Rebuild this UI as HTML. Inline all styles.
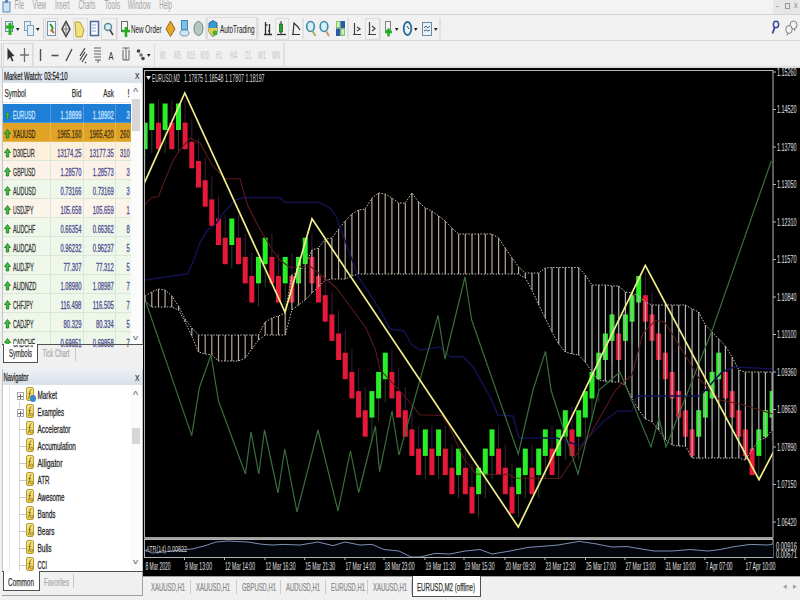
<!DOCTYPE html><html><head><meta charset="utf-8"><style>
*{margin:0;padding:0;box-sizing:border-box}
html,body{width:800px;height:600px;overflow:hidden;background:#f0f0f0;font-family:"Liberation Sans",sans-serif;position:relative}
.a{position:absolute}
.t{position:absolute;white-space:nowrap;line-height:1;transform-origin:left top}
.r{position:absolute;white-space:nowrap;line-height:1;transform-origin:right top;text-align:right}
</style></head><body>
<div class="a" style="left:0px;top:0px;width:800px;height:14px;background:#f3f3f3;"></div>
<div class="a" style="left:0px;top:14px;width:800px;height:1px;background:#d4d4d4;"></div>
<svg class="a" style="left:1px;top:0px" width="11" height="13"><rect x="2" y="2" width="7" height="10" fill="#cfe2f2" stroke="#5a88b8" stroke-width="1"/><rect x="4" y="0" width="3" height="3" fill="#5a88b8"/></svg>
<div class="a" style="left:773px;top:0px;width:27px;height:14px;background:#e6e6e6;"></div>
<div class="t" style="left:776px;top:0.54px;font-size:10px;color:#888;transform:scaleX(0.8);">-</div>
<div class="a" style="left:785px;top:3px;width:5px;height:6px;background:none;border:1px solid #999"></div>
<div class="t" style="left:794px;top:1.38px;font-size:9px;color:#888;transform:scaleX(0.8);">x</div>
<div class="a" style="left:0px;top:15px;width:800px;height:26px;background:#f1f1f1;"></div>
<div class="a" style="left:0px;top:40px;width:800px;height:1px;background:#d8d8d8;"></div>
<div class="a" style="left:0px;top:41px;width:800px;height:26px;background:#f1f1f1;"></div>
<div class="a" style="left:0px;top:66px;width:800px;height:2px;background:#dedede;"></div>
<svg class="a" style="left:0;top:15px" width="800" height="52" viewBox="0 15 800 52">
<line x1="1.5" y1="18" x2="1.5" y2="39" stroke="#d0d0d0" stroke-width="1"/>
<rect x="5.5" y="21.5" width="7" height="10" fill="#e8eef4" stroke="#6a8aa8"/>
<path d="M6,27 h8 M10,23 v12" stroke="#22b022" stroke-width="3"/>
<polygon points="16,28 19.5,28 17.75,31" fill="#202020"/>
<rect x="24.5" y="21.5" width="6" height="9" fill="#e4eef8" stroke="#7aa0c0"/>
<rect x="27.5" y="25.5" width="6" height="10" fill="#e4eef8" stroke="#7aa0c0"/>
<polygon points="36,28 39.5,28 37.75,31" fill="#202020"/>
<line x1="43.5" y1="18" x2="43.5" y2="39" stroke="#d0d0d0" stroke-width="1"/>
<rect x="45.5" y="18.5" width="12" height="21" fill="none" stroke="#dcdcdc" stroke-width="1"/>
<rect x="47.5" y="21.5" width="8" height="14" fill="#f4f8fc" stroke="#7890a8"/>
<path d="M50,24 l3,4 M53,28 l-2,3" stroke="#2a9a2a" stroke-width="2"/><path d="M51,30 l3,3" stroke="#d86a2a" stroke-width="2"/>
<polygon points="66,21.5 70,29 66,36.5 62,29" fill="#f4f4f4" stroke="#404040" stroke-width="1.5"/>
<path d="M63,29 h6 M66,24 v10" stroke="#707070" stroke-width="1"/>
<rect x="73.5" y="18.5" width="14" height="21" fill="none" stroke="#dcdcdc" stroke-width="1"/>
<polygon points="75,22 80,22 84,30 82,37 76,37" fill="#f2e27a" stroke="#b8a030" stroke-width="1"/>
<rect x="90.5" y="21.5" width="8" height="14" fill="#f8fbff" stroke="#4a6a9a" stroke-width="1.5"/>
<path d="M92,25 h4 M92,28 h4 M92,31 h4" stroke="#8aaad0" stroke-width="1"/>
<rect x="101.5" y="18.5" width="15" height="21" fill="none" stroke="#dcdcdc" stroke-width="1"/>
<circle cx="108" cy="27" r="3.5" fill="#d8ecf4" stroke="#5a8a9a" stroke-width="1.5"/>
<path d="M110,30 l3,5" stroke="#404040" stroke-width="1.5"/>
<line x1="117" y1="18" x2="117" y2="39" stroke="#d0d0d0" stroke-width="1"/>
<rect x="121.5" y="21.5" width="6" height="10" fill="#f4f8f4" stroke="#6a6a6a"/>
<path d="M122,31 h8 M126,27 v10" stroke="#22b022" stroke-width="2.6"/>
<text x="131" y="32.5" font-family="Liberation Sans" font-size="11" fill="#202020" textLength="30.5" lengthAdjust="spacingAndGlyphs">New Order</text>
<polygon points="170.5,21 175,29 170.5,36.5 166,29" fill="#e0a828" stroke="#9a6a10" stroke-width="1"/>
<rect x="181.5" y="20.5" width="6" height="9" fill="#7ac0e8" stroke="#3a8ac0"/>
<ellipse cx="184.5" cy="33" rx="4.5" ry="3" fill="#d0e4f0" stroke="#6a9ab8"/>
<ellipse cx="198.5" cy="28.5" rx="4.5" ry="7" fill="#b8c8c0" stroke="#6a8a7a" stroke-width="1"/>
<line x1="206" y1="18" x2="206" y2="39" stroke="#d0d0d0" stroke-width="1"/>
<rect x="207.5" y="17.5" width="49" height="22" fill="none" stroke="#dcdcdc" stroke-width="1"/>
<polygon points="213,20.5 217,23 217,32 213,37 209,32 209,23" fill="#3a9ad0" stroke="#2a6aa0"/>
<polygon points="209,28 217,28 217,32 213,37 209,32" fill="#e8d040"/><circle cx="215" cy="33" r="2.5" fill="#40b040"/>
<text x="220" y="32.5" font-family="Liberation Sans" font-size="11" fill="#202020" textLength="34.5" lengthAdjust="spacingAndGlyphs">AutoTrading</text>
<line x1="258" y1="18" x2="258" y2="39" stroke="#d0d0d0" stroke-width="1"/>
<path d="M265.5,22 v12 M265.5,25 h2 M269.5,24 v10 M268,31 h1.5 M264,34.5 h8" stroke="#303030" stroke-width="1.3"/>
<rect x="275.5" y="18.5" width="13" height="21" fill="none" stroke="#dcdcdc" stroke-width="1"/>
<path d="M281,21 v14" stroke="#303030" stroke-width="1"/><rect x="279.5" y="24" width="3" height="8" fill="#2aa02a" stroke="#104010" stroke-width=".6"/>
<path d="M277,34.5 h9" stroke="#303030" stroke-width="1.3"/>
<path d="M293,34 l1,-11 l4,4 l2,3 M292,34.5 h8" stroke="#303030" stroke-width="1.2" fill="none"/>
<line x1="303" y1="18" x2="303" y2="39" stroke="#d0d0d0" stroke-width="1"/>
<ellipse cx="310.5" cy="26.5" rx="3.8" ry="5" fill="#d8eef8" stroke="#3a8aa8" stroke-width="1.6"/><path d="M312.5,31 l3,5" stroke="#a8b060" stroke-width="2"/>
<ellipse cx="324" cy="26.5" rx="3.8" ry="5" fill="#d8eef8" stroke="#3a8aa8" stroke-width="1.6"/><path d="M326,31 l3,5" stroke="#c0a070" stroke-width="2"/>
<rect x="336" y="21" width="4.5" height="7.5" fill="#80c860"/><rect x="340.5" y="21" width="4.5" height="7.5" fill="#2a5aa0"/>
<rect x="336" y="28.5" width="4.5" height="7.5" fill="#2a5aa0"/><rect x="340.5" y="28.5" width="4.5" height="7.5" fill="#80c860"/>
<rect x="337" y="22" width="2.5" height="5" fill="#d0f0c0"/><rect x="341.5" y="29.5" width="2.5" height="5" fill="#d0f0c0"/>
<line x1="348" y1="18" x2="348" y2="39" stroke="#d0d0d0" stroke-width="1"/>
<path d="M354.5,23 v12 M353,34.5 h8 M357,27 l3,2 l-3,2" stroke="#404040" stroke-width="1.2" fill="none"/>
<rect x="365.5" y="18.5" width="14" height="21" fill="none" stroke="#dcdcdc" stroke-width="1"/>
<path d="M369.5,22 v13 M368,34.5 h8 M372,26 l3,2.5 l-3,2.5" stroke="#404040" stroke-width="1.2" fill="none"/>
<line x1="380" y1="18" x2="380" y2="39" stroke="#d0d0d0" stroke-width="1"/>
<rect x="385.5" y="21.5" width="5" height="9" fill="#f0f4f0" stroke="#808080"/>
<path d="M385,32 h7 M388.5,28.5 v8" stroke="#22b022" stroke-width="2.6"/>
<polygon points="395,28 398.5,28 396.75,31" fill="#202020"/>
<ellipse cx="407.5" cy="28.5" rx="3.8" ry="6.5" fill="#e8f4fa" stroke="#2a6a98" stroke-width="1.8"/>
<path d="M407,26 l2,3" stroke="#404040" stroke-width="1"/>
<polygon points="414,28 417.5,28 415.75,31" fill="#202020"/>
<rect x="422.5" y="22.5" width="9" height="13" fill="#e8f0f8" stroke="#6a8aaa"/>
<path d="M424,28 l2,-2 l2,2 l2,-2 M424,31 l2,-1 l2,1 l2,-1" stroke="#506070" stroke-width="1" fill="none"/>
<polygon points="434,28 437.5,28 435.75,31" fill="#202020"/>
<line x1="440" y1="18" x2="440" y2="39" stroke="#d0d0d0" stroke-width="1"/>
<ellipse cx="776" cy="24.5" rx="2.6" ry="3.2" fill="none" stroke="#3a4a98" stroke-width="1.5"/><path d="M774.6,27.5 L772.5,33.5" stroke="#3a4a98" stroke-width="1.8"/>
<ellipse cx="793.5" cy="25" rx="3.5" ry="4" fill="#f4f4f4" stroke="#808080"/><ellipse cx="789" cy="29.5" rx="3.2" ry="4" fill="#f4f4f4" stroke="#808080"/><path d="M788,33 l-1,2.5 M794,28.5 l1,2.5" stroke="#808080"/>
<line x1="1.5" y1="43" x2="1.5" y2="66" stroke="#d0d0d0" stroke-width="1"/>
<rect x="3.5" y="43.5" width="29" height="23" fill="none" stroke="#dcdcdc" stroke-width="1"/>
<path d="M7.5,48 v12 l2.5,-3 l2,4.5 l1.5,-0.7 l-2,-4.3 l3,-0.5 z" fill="#303030"/>
<path d="M24.5,48 v14 M20,55 h9" stroke="#707070" stroke-width="1.3"/>
<line x1="33" y1="43" x2="33" y2="66" stroke="#d8d8d8" stroke-width="1"/>
<path d="M40.5,49 v12" stroke="#505050" stroke-width="1.4"/>
<path d="M51.5,55.5 h7" stroke="#505050" stroke-width="1.6"/>
<path d="M66,61 l6,-12" stroke="#505050" stroke-width="1.4"/>
<path d="M80,56 l5,-8 M80,60 l5,-8 M82,62 l5,-8 M85,63 l1,-1" stroke="#404040" stroke-width="1.2"/>
<path d="M94,48 h7 M94,51 h7 M94,54 h7 M94,57 h7 M95,60 h6 M98,60 v3" stroke="#606060" stroke-width="1"/>
<text x="108.5" y="60" font-family="Liberation Sans" font-size="11" fill="#303030" textLength="5" lengthAdjust="spacingAndGlyphs">A</text>
<path d="M122.5,48 h7 M126,48 v12 M123,50 v10 h6 v-10" stroke="#606060" stroke-width="1" fill="none"/>
<circle cx="138.5" cy="51" r="1.8" fill="#404040"/><circle cx="141" cy="55" r="1.8" fill="#707070"/><circle cx="143" cy="58.5" r="1.8" fill="#404040"/>
<polygon points="147,54 150.5,54 148.75,57" fill="#202020"/>
<line x1="154.5" y1="44" x2="154.5" y2="65" stroke="#c8c8c8" stroke-width="1" stroke-dasharray="1,1"/>
<text x="160" y="59" font-family="Liberation Sans" font-size="10" fill="#c4c4c4" textLength="6" lengthAdjust="spacingAndGlyphs">M1</text>
<text x="174" y="59" font-family="Liberation Sans" font-size="10" fill="#c4c4c4" textLength="7" lengthAdjust="spacingAndGlyphs">M5</text>
<text x="187" y="59" font-family="Liberation Sans" font-size="10" fill="#c4c4c4" textLength="8" lengthAdjust="spacingAndGlyphs">M15</text>
<text x="200.5" y="59" font-family="Liberation Sans" font-size="10" fill="#c4c4c4" textLength="8.5" lengthAdjust="spacingAndGlyphs">M30</text>
<text x="216" y="59" font-family="Liberation Sans" font-size="10" fill="#c4c4c4" textLength="6" lengthAdjust="spacingAndGlyphs">H1</text>
<text x="230" y="59" font-family="Liberation Sans" font-size="10" fill="#c4c4c4" textLength="7" lengthAdjust="spacingAndGlyphs">H4</text>
<text x="245" y="59" font-family="Liberation Sans" font-size="10" fill="#c4c4c4" textLength="6" lengthAdjust="spacingAndGlyphs">D1</text>
<text x="258" y="59" font-family="Liberation Sans" font-size="10" fill="#c4c4c4" textLength="8" lengthAdjust="spacingAndGlyphs">W1</text>
<text x="272" y="59" font-family="Liberation Sans" font-size="10" fill="#c4c4c4" textLength="8" lengthAdjust="spacingAndGlyphs">MN</text>
<line x1="284" y1="43" x2="284" y2="66" stroke="#d0d0d0" stroke-width="1"/>
</svg>
<div class="a" style="left:0px;top:68px;width:143px;height:532px;background:#f0f0f0;"></div>
<div class="a" style="left:2px;top:68px;width:141px;height:277px;background:#ffffff;border-left:1px solid #c4c4c4;border-right:1px solid #c4c4c4"></div>
<div class="a" style="left:3px;top:68px;width:139px;height:15px;background:linear-gradient(#edf1f5,#d8e0e8)"></div>
<div class="a" style="left:3px;top:83px;width:128px;height:20px;background:#ffffff;"></div>
<div class="a" style="left:3px;top:102px;width:128px;height:1px;background:#e8e8e8;"></div>
<div class="a" style="left:0;top:0;width:800px;height:344px;overflow:hidden">
<div class="a" style="left:3px;top:103.5px;width:128px;height:19px;background:#1f7fd6;"></div>
<div class="a" style="left:3px;top:121.5px;width:128px;height:1px;background:rgba(255,255,255,0.2);"></div>
<div class="a" style="left:50px;top:103.5px;width:1px;height:19px;background:rgba(255,255,255,0.2);"></div>
<div class="a" style="left:83px;top:103.5px;width:1px;height:19px;background:rgba(255,255,255,0.2);"></div>
<div class="a" style="left:115px;top:103.5px;width:1px;height:19px;background:rgba(255,255,255,0.2);"></div>
<svg class="a" style="left:5px;top:111.5px" width="5" height="7"><polygon points="2.5,0 5,3 3.5,3 3.5,7 1.5,7 1.5,3 0,3" fill="#48c048" stroke="#1a6a1a" stroke-width="0.5"/></svg>
<div class="a" style="left:3px;top:122.5px;width:128px;height:19px;background:#e1a324;"></div>
<div class="a" style="left:3px;top:140.5px;width:128px;height:1px;background:rgba(255,255,255,0.2);"></div>
<div class="a" style="left:50px;top:122.5px;width:1px;height:19px;background:rgba(255,255,255,0.2);"></div>
<div class="a" style="left:83px;top:122.5px;width:1px;height:19px;background:rgba(255,255,255,0.2);"></div>
<div class="a" style="left:115px;top:122.5px;width:1px;height:19px;background:rgba(255,255,255,0.2);"></div>
<svg class="a" style="left:4px;top:128.5px" width="7" height="10"><polygon points="3.5,0.5 6.5,4.5 4.7,4.5 4.7,9 2.3,9 2.3,4.5 0.5,4.5" fill="#3cc03c" stroke="#1a701a" stroke-width="0.8"/></svg>
<div class="a" style="left:3px;top:141.5px;width:128px;height:19px;background:#fcefdc;"></div>
<div class="a" style="left:3px;top:159.5px;width:128px;height:1px;background:#dce6d6;"></div>
<div class="a" style="left:50px;top:141.5px;width:1px;height:19px;background:#dce6d6;"></div>
<div class="a" style="left:83px;top:141.5px;width:1px;height:19px;background:#dce6d6;"></div>
<div class="a" style="left:115px;top:141.5px;width:1px;height:19px;background:#dce6d6;"></div>
<svg class="a" style="left:4px;top:147.5px" width="7" height="10"><polygon points="3.5,0.5 6.5,4.5 4.7,4.5 4.7,9 2.3,9 2.3,4.5 0.5,4.5" fill="#3cc03c" stroke="#1a701a" stroke-width="0.8"/></svg>
<div class="a" style="left:3px;top:160.5px;width:128px;height:19px;background:#fbf3ea;"></div>
<div class="a" style="left:3px;top:178.5px;width:128px;height:1px;background:#dce6d6;"></div>
<div class="a" style="left:50px;top:160.5px;width:1px;height:19px;background:#dce6d6;"></div>
<div class="a" style="left:83px;top:160.5px;width:1px;height:19px;background:#dce6d6;"></div>
<div class="a" style="left:115px;top:160.5px;width:1px;height:19px;background:#dce6d6;"></div>
<svg class="a" style="left:4px;top:166.5px" width="7" height="10"><polygon points="3.5,0.5 6.5,4.5 4.7,4.5 4.7,9 2.3,9 2.3,4.5 0.5,4.5" fill="#3cc03c" stroke="#1a701a" stroke-width="0.8"/></svg>
<div class="a" style="left:3px;top:179.5px;width:128px;height:19px;background:#eef7ea;"></div>
<div class="a" style="left:3px;top:197.5px;width:128px;height:1px;background:#dce6d6;"></div>
<div class="a" style="left:50px;top:179.5px;width:1px;height:19px;background:#dce6d6;"></div>
<div class="a" style="left:83px;top:179.5px;width:1px;height:19px;background:#dce6d6;"></div>
<div class="a" style="left:115px;top:179.5px;width:1px;height:19px;background:#dce6d6;"></div>
<svg class="a" style="left:4px;top:185.5px" width="7" height="10"><polygon points="3.5,0.5 6.5,4.5 4.7,4.5 4.7,9 2.3,9 2.3,4.5 0.5,4.5" fill="#3cc03c" stroke="#1a701a" stroke-width="0.8"/></svg>
<div class="a" style="left:3px;top:198.5px;width:128px;height:19px;background:#fbf4ea;"></div>
<div class="a" style="left:3px;top:216.5px;width:128px;height:1px;background:#dce6d6;"></div>
<div class="a" style="left:50px;top:198.5px;width:1px;height:19px;background:#dce6d6;"></div>
<div class="a" style="left:83px;top:198.5px;width:1px;height:19px;background:#dce6d6;"></div>
<div class="a" style="left:115px;top:198.5px;width:1px;height:19px;background:#dce6d6;"></div>
<svg class="a" style="left:4px;top:204.5px" width="7" height="10"><polygon points="3.5,0.5 6.5,4.5 4.7,4.5 4.7,9 2.3,9 2.3,4.5 0.5,4.5" fill="#3cc03c" stroke="#1a701a" stroke-width="0.8"/></svg>
<div class="a" style="left:3px;top:217.5px;width:128px;height:19px;background:#eef7ea;"></div>
<div class="a" style="left:3px;top:235.5px;width:128px;height:1px;background:#dce6d6;"></div>
<div class="a" style="left:50px;top:217.5px;width:1px;height:19px;background:#dce6d6;"></div>
<div class="a" style="left:83px;top:217.5px;width:1px;height:19px;background:#dce6d6;"></div>
<div class="a" style="left:115px;top:217.5px;width:1px;height:19px;background:#dce6d6;"></div>
<svg class="a" style="left:4px;top:223.5px" width="7" height="10"><polygon points="3.5,0.5 6.5,4.5 4.7,4.5 4.7,9 2.3,9 2.3,4.5 0.5,4.5" fill="#3cc03c" stroke="#1a701a" stroke-width="0.8"/></svg>
<div class="a" style="left:3px;top:236.5px;width:128px;height:19px;background:#eef7ea;"></div>
<div class="a" style="left:3px;top:254.5px;width:128px;height:1px;background:#dce6d6;"></div>
<div class="a" style="left:50px;top:236.5px;width:1px;height:19px;background:#dce6d6;"></div>
<div class="a" style="left:83px;top:236.5px;width:1px;height:19px;background:#dce6d6;"></div>
<div class="a" style="left:115px;top:236.5px;width:1px;height:19px;background:#dce6d6;"></div>
<svg class="a" style="left:4px;top:242.5px" width="7" height="10"><polygon points="3.5,0.5 6.5,4.5 4.7,4.5 4.7,9 2.3,9 2.3,4.5 0.5,4.5" fill="#3cc03c" stroke="#1a701a" stroke-width="0.8"/></svg>
<div class="a" style="left:3px;top:255.5px;width:128px;height:19px;background:#eef7ea;"></div>
<div class="a" style="left:3px;top:273.5px;width:128px;height:1px;background:#dce6d6;"></div>
<div class="a" style="left:50px;top:255.5px;width:1px;height:19px;background:#dce6d6;"></div>
<div class="a" style="left:83px;top:255.5px;width:1px;height:19px;background:#dce6d6;"></div>
<div class="a" style="left:115px;top:255.5px;width:1px;height:19px;background:#dce6d6;"></div>
<svg class="a" style="left:4px;top:261.5px" width="7" height="10"><polygon points="3.5,0.5 6.5,4.5 4.7,4.5 4.7,9 2.3,9 2.3,4.5 0.5,4.5" fill="#3cc03c" stroke="#1a701a" stroke-width="0.8"/></svg>
<div class="a" style="left:3px;top:274.5px;width:128px;height:19px;background:#eef7ea;"></div>
<div class="a" style="left:3px;top:292.5px;width:128px;height:1px;background:#dce6d6;"></div>
<div class="a" style="left:50px;top:274.5px;width:1px;height:19px;background:#dce6d6;"></div>
<div class="a" style="left:83px;top:274.5px;width:1px;height:19px;background:#dce6d6;"></div>
<div class="a" style="left:115px;top:274.5px;width:1px;height:19px;background:#dce6d6;"></div>
<svg class="a" style="left:4px;top:280.5px" width="7" height="10"><polygon points="3.5,0.5 6.5,4.5 4.7,4.5 4.7,9 2.3,9 2.3,4.5 0.5,4.5" fill="#3cc03c" stroke="#1a701a" stroke-width="0.8"/></svg>
<div class="a" style="left:3px;top:293.5px;width:128px;height:19px;background:#eef7ea;"></div>
<div class="a" style="left:3px;top:311.5px;width:128px;height:1px;background:#dce6d6;"></div>
<div class="a" style="left:50px;top:293.5px;width:1px;height:19px;background:#dce6d6;"></div>
<div class="a" style="left:83px;top:293.5px;width:1px;height:19px;background:#dce6d6;"></div>
<div class="a" style="left:115px;top:293.5px;width:1px;height:19px;background:#dce6d6;"></div>
<svg class="a" style="left:4px;top:299.5px" width="7" height="10"><polygon points="3.5,0.5 6.5,4.5 4.7,4.5 4.7,9 2.3,9 2.3,4.5 0.5,4.5" fill="#3cc03c" stroke="#1a701a" stroke-width="0.8"/></svg>
<div class="a" style="left:3px;top:312.5px;width:128px;height:19px;background:#eef7ea;"></div>
<div class="a" style="left:3px;top:330.5px;width:128px;height:1px;background:#dce6d6;"></div>
<div class="a" style="left:50px;top:312.5px;width:1px;height:19px;background:#dce6d6;"></div>
<div class="a" style="left:83px;top:312.5px;width:1px;height:19px;background:#dce6d6;"></div>
<div class="a" style="left:115px;top:312.5px;width:1px;height:19px;background:#dce6d6;"></div>
<svg class="a" style="left:4px;top:318.5px" width="7" height="10"><polygon points="3.5,0.5 6.5,4.5 4.7,4.5 4.7,9 2.3,9 2.3,4.5 0.5,4.5" fill="#3cc03c" stroke="#1a701a" stroke-width="0.8"/></svg>
<div class="a" style="left:3px;top:331.5px;width:128px;height:19px;background:#eef7ea;"></div>
<div class="a" style="left:3px;top:349.5px;width:128px;height:1px;background:#dce6d6;"></div>
<div class="a" style="left:50px;top:331.5px;width:1px;height:19px;background:#dce6d6;"></div>
<div class="a" style="left:83px;top:331.5px;width:1px;height:19px;background:#dce6d6;"></div>
<div class="a" style="left:115px;top:331.5px;width:1px;height:19px;background:#dce6d6;"></div>
<svg class="a" style="left:4px;top:337.5px" width="7" height="10"><polygon points="3.5,0.5 6.5,4.5 4.7,4.5 4.7,9 2.3,9 2.3,4.5 0.5,4.5" fill="#3cc03c" stroke="#1a701a" stroke-width="0.8"/></svg>
</div>
<div class="a" style="left:131px;top:83px;width:11px;height:261px;background:#fbfbfb;"></div>
<div class="a" style="left:132px;top:99px;width:8px;height:32px;background:#d6d6d6;"></div>
<div class="a" style="left:2px;top:344px;width:141px;height:1px;background:#505050;"></div>
<div class="a" style="left:2px;top:345px;width:141px;height:21px;background:#f0f0f0;"></div>
<div class="a" style="left:3px;top:344px;width:35px;height:19px;background:#fff;border:1px solid #505050;border-top:none"></div>
<div class="a" style="left:75px;top:347px;width:1px;height:14px;background:#c8c8c8;"></div>
<div class="a" style="left:2px;top:369px;width:141px;height:231px;background:#ffffff;border-left:1px solid #c4c4c4;border-right:1px solid #c4c4c4"></div>
<div class="a" style="left:3px;top:369px;width:139px;height:16px;background:linear-gradient(#edf1f5,#d8e0e8)"></div>
<div class="a" style="left:131px;top:386px;width:11px;height:185px;background:#fbfbfb;"></div>
<div class="a" style="left:132px;top:428px;width:8px;height:16px;background:#d6d6d6;"></div>
<div class="a" style="left:9px;top:386px;width:1px;height:185px;background:#e6e6e6;"></div>
<div class="a" style="left:19px;top:401px;width:1px;height:170px;background:#d4d4d4;"></div>
<div class="a" style="left:17px;top:392px;width:7px;height:8px;background:#fff;border:1px solid #a8a8a8"></div>
<div class="a" style="left:18px;top:396px;width:5px;height:1px;background:#707070;"></div>
<div class="a" style="left:20px;top:394px;width:1px;height:5px;background:#707070;"></div>
<div class="a" style="left:26px;top:387px;width:8px;height:14px;background:linear-gradient(#f4e68a,#e6d050);border:1px solid #b89a38;border-radius:2px"></div>
<svg class="a" style="left:26px;top:387px" width="8" height="14"><path d="M5.5,2.5 Q4,2.5 3.8,5 L3.2,10 Q3,11.5 2,11.5 M2.5,6.5 H5" stroke="#8a6a18" stroke-width="0.9" fill="none"/><circle cx="5.6" cy="10.5" r="1.3" fill="none" stroke="#8a6a18" stroke-width="0.7"/></svg>
<div class="a" style="left:30px;top:395px;width:6px;height:7px;background:#3a86d0;border-radius:3px"></div>
<div class="a" style="left:17px;top:409px;width:7px;height:8px;background:#fff;border:1px solid #a8a8a8"></div>
<div class="a" style="left:18px;top:413px;width:5px;height:1px;background:#707070;"></div>
<div class="a" style="left:20px;top:411px;width:1px;height:5px;background:#707070;"></div>
<div class="a" style="left:26px;top:404px;width:8px;height:14px;background:linear-gradient(#f4e68a,#e6d050);border:1px solid #b89a38;border-radius:2px"></div>
<svg class="a" style="left:26px;top:404px" width="8" height="14"><path d="M5.5,2.5 Q4,2.5 3.8,5 L3.2,10 Q3,11.5 2,11.5 M2.5,6.5 H5" stroke="#8a6a18" stroke-width="0.9" fill="none"/><circle cx="5.6" cy="10.5" r="1.3" fill="none" stroke="#8a6a18" stroke-width="0.7"/></svg>
<div class="a" style="left:19px;top:429px;width:7px;height:1px;background:#c8c8c8;"></div>
<div class="a" style="left:26px;top:421px;width:8px;height:14px;background:linear-gradient(#f4e68a,#e6d050);border:1px solid #b89a38;border-radius:2px"></div>
<svg class="a" style="left:26px;top:421px" width="8" height="14"><path d="M5.5,2.5 Q4,2.5 3.8,5 L3.2,10 Q3,11.5 2,11.5 M2.5,6.5 H5" stroke="#8a6a18" stroke-width="0.9" fill="none"/><circle cx="5.6" cy="10.5" r="1.3" fill="none" stroke="#8a6a18" stroke-width="0.7"/></svg>
<div class="a" style="left:19px;top:446px;width:7px;height:1px;background:#c8c8c8;"></div>
<div class="a" style="left:26px;top:438px;width:8px;height:14px;background:linear-gradient(#f4e68a,#e6d050);border:1px solid #b89a38;border-radius:2px"></div>
<svg class="a" style="left:26px;top:438px" width="8" height="14"><path d="M5.5,2.5 Q4,2.5 3.8,5 L3.2,10 Q3,11.5 2,11.5 M2.5,6.5 H5" stroke="#8a6a18" stroke-width="0.9" fill="none"/><circle cx="5.6" cy="10.5" r="1.3" fill="none" stroke="#8a6a18" stroke-width="0.7"/></svg>
<div class="a" style="left:19px;top:463px;width:7px;height:1px;background:#c8c8c8;"></div>
<div class="a" style="left:26px;top:455px;width:8px;height:14px;background:linear-gradient(#f4e68a,#e6d050);border:1px solid #b89a38;border-radius:2px"></div>
<svg class="a" style="left:26px;top:455px" width="8" height="14"><path d="M5.5,2.5 Q4,2.5 3.8,5 L3.2,10 Q3,11.5 2,11.5 M2.5,6.5 H5" stroke="#8a6a18" stroke-width="0.9" fill="none"/><circle cx="5.6" cy="10.5" r="1.3" fill="none" stroke="#8a6a18" stroke-width="0.7"/></svg>
<div class="a" style="left:19px;top:480px;width:7px;height:1px;background:#c8c8c8;"></div>
<div class="a" style="left:26px;top:472px;width:8px;height:14px;background:linear-gradient(#f4e68a,#e6d050);border:1px solid #b89a38;border-radius:2px"></div>
<svg class="a" style="left:26px;top:472px" width="8" height="14"><path d="M5.5,2.5 Q4,2.5 3.8,5 L3.2,10 Q3,11.5 2,11.5 M2.5,6.5 H5" stroke="#8a6a18" stroke-width="0.9" fill="none"/><circle cx="5.6" cy="10.5" r="1.3" fill="none" stroke="#8a6a18" stroke-width="0.7"/></svg>
<div class="a" style="left:19px;top:497px;width:7px;height:1px;background:#c8c8c8;"></div>
<div class="a" style="left:26px;top:489px;width:8px;height:14px;background:linear-gradient(#f4e68a,#e6d050);border:1px solid #b89a38;border-radius:2px"></div>
<svg class="a" style="left:26px;top:489px" width="8" height="14"><path d="M5.5,2.5 Q4,2.5 3.8,5 L3.2,10 Q3,11.5 2,11.5 M2.5,6.5 H5" stroke="#8a6a18" stroke-width="0.9" fill="none"/><circle cx="5.6" cy="10.5" r="1.3" fill="none" stroke="#8a6a18" stroke-width="0.7"/></svg>
<div class="a" style="left:19px;top:514px;width:7px;height:1px;background:#c8c8c8;"></div>
<div class="a" style="left:26px;top:506px;width:8px;height:14px;background:linear-gradient(#f4e68a,#e6d050);border:1px solid #b89a38;border-radius:2px"></div>
<svg class="a" style="left:26px;top:506px" width="8" height="14"><path d="M5.5,2.5 Q4,2.5 3.8,5 L3.2,10 Q3,11.5 2,11.5 M2.5,6.5 H5" stroke="#8a6a18" stroke-width="0.9" fill="none"/><circle cx="5.6" cy="10.5" r="1.3" fill="none" stroke="#8a6a18" stroke-width="0.7"/></svg>
<div class="a" style="left:19px;top:531px;width:7px;height:1px;background:#c8c8c8;"></div>
<div class="a" style="left:26px;top:523px;width:8px;height:14px;background:linear-gradient(#f4e68a,#e6d050);border:1px solid #b89a38;border-radius:2px"></div>
<svg class="a" style="left:26px;top:523px" width="8" height="14"><path d="M5.5,2.5 Q4,2.5 3.8,5 L3.2,10 Q3,11.5 2,11.5 M2.5,6.5 H5" stroke="#8a6a18" stroke-width="0.9" fill="none"/><circle cx="5.6" cy="10.5" r="1.3" fill="none" stroke="#8a6a18" stroke-width="0.7"/></svg>
<div class="a" style="left:19px;top:548px;width:7px;height:1px;background:#c8c8c8;"></div>
<div class="a" style="left:26px;top:540px;width:8px;height:14px;background:linear-gradient(#f4e68a,#e6d050);border:1px solid #b89a38;border-radius:2px"></div>
<svg class="a" style="left:26px;top:540px" width="8" height="14"><path d="M5.5,2.5 Q4,2.5 3.8,5 L3.2,10 Q3,11.5 2,11.5 M2.5,6.5 H5" stroke="#8a6a18" stroke-width="0.9" fill="none"/><circle cx="5.6" cy="10.5" r="1.3" fill="none" stroke="#8a6a18" stroke-width="0.7"/></svg>
<div class="a" style="left:19px;top:565px;width:7px;height:1px;background:#c8c8c8;"></div>
<div class="a" style="left:26px;top:557px;width:8px;height:14px;background:linear-gradient(#f4e68a,#e6d050);border:1px solid #b89a38;border-radius:2px"></div>
<svg class="a" style="left:26px;top:557px" width="8" height="14"><path d="M5.5,2.5 Q4,2.5 3.8,5 L3.2,10 Q3,11.5 2,11.5 M2.5,6.5 H5" stroke="#8a6a18" stroke-width="0.9" fill="none"/><circle cx="5.6" cy="10.5" r="1.3" fill="none" stroke="#8a6a18" stroke-width="0.7"/></svg>
<div class="a" style="left:2px;top:571px;width:141px;height:1px;background:#505050;"></div>
<div class="a" style="left:2px;top:572px;width:141px;height:28px;background:#f0f0f0;"></div>
<div class="a" style="left:2px;top:595px;width:141px;height:1px;background:#a0a0a0;"></div>
<div class="a" style="left:142px;top:572px;width:1px;height:24px;background:#a0a0a0;"></div>
<div class="a" style="left:3px;top:571px;width:37px;height:20px;background:#fff;border:1px solid #505050;border-top:none"></div>
<div class="a" style="left:73px;top:574px;width:1px;height:14px;background:#c8c8c8;"></div>
<div class="a" style="left:143px;top:576px;width:657px;height:24px;background:#f0f0f0;"></div>
<div class="a" style="left:143px;top:576px;width:657px;height:1px;background:#a0a0a0;"></div>
<div class="a" style="left:190px;top:580px;width:1px;height:14px;background:#cccccc;"></div>
<div class="a" style="left:236px;top:580px;width:1px;height:14px;background:#cccccc;"></div>
<div class="a" style="left:280px;top:580px;width:1px;height:14px;background:#cccccc;"></div>
<div class="a" style="left:325px;top:580px;width:1px;height:14px;background:#cccccc;"></div>
<div class="a" style="left:367px;top:580px;width:1px;height:14px;background:#cccccc;"></div>
<div class="a" style="left:411px;top:580px;width:1px;height:14px;background:#cccccc;"></div>
<div class="a" style="left:412px;top:576px;width:69px;height:21px;background:#fff;border:1px solid #505050;border-top:none"></div>
<svg class="a" style="left:0;top:0" width="800" height="600" viewBox="0 0 800 600">
<defs><clipPath id="cp"><rect x="145" y="71" width="628" height="466"/></clipPath><clipPath id="cp2"><rect x="145" y="540" width="628" height="17"/></clipPath></defs>
<rect x="143" y="68" width="657" height="508" fill="#000"/>
<g clip-path="url(#cp)">
<line x1="145.1" y1="149.2" x2="145.1" y2="172.2" stroke="#2a3e2a" stroke-width="1"/>
<rect x="142.6" y="122.7" width="5" height="26.5" fill="#28ee28"/>
<line x1="151.8" y1="130.0" x2="151.8" y2="153.0" stroke="#2a3e2a" stroke-width="1"/>
<rect x="149.3" y="103.5" width="5" height="26.5" fill="#28ee28"/>
<line x1="158.5" y1="99.7" x2="158.5" y2="122.67" stroke="#3a1c3a" stroke-width="1"/>
<rect x="156.0" y="122.7" width="5" height="26.5" fill="#e6193a"/>
<line x1="165.1" y1="130.0" x2="165.1" y2="153.0" stroke="#2a3e2a" stroke-width="1"/>
<rect x="162.6" y="103.5" width="5" height="26.5" fill="#28ee28"/>
<line x1="171.8" y1="99.7" x2="171.8" y2="122.67" stroke="#3a1c3a" stroke-width="1"/>
<rect x="169.3" y="122.7" width="5" height="26.5" fill="#e6193a"/>
<line x1="178.5" y1="130.0" x2="178.5" y2="153.0" stroke="#2a3e2a" stroke-width="1"/>
<rect x="176.0" y="103.5" width="5" height="26.5" fill="#28ee28"/>
<line x1="185.1" y1="99.7" x2="185.1" y2="122.67" stroke="#3a1c3a" stroke-width="1"/>
<rect x="182.6" y="122.7" width="5" height="26.5" fill="#e6193a"/>
<line x1="191.8" y1="118.8" x2="191.8" y2="141.84" stroke="#3a1c3a" stroke-width="1"/>
<rect x="189.3" y="141.8" width="5" height="26.5" fill="#e6193a"/>
<line x1="198.5" y1="138.0" x2="198.5" y2="161.01" stroke="#3a1c3a" stroke-width="1"/>
<rect x="196.0" y="161.0" width="5" height="26.5" fill="#e6193a"/>
<line x1="205.2" y1="157.2" x2="205.2" y2="180.18" stroke="#3a1c3a" stroke-width="1"/>
<rect x="202.7" y="180.2" width="5" height="26.5" fill="#e6193a"/>
<line x1="211.8" y1="176.4" x2="211.8" y2="199.35000000000002" stroke="#3a1c3a" stroke-width="1"/>
<rect x="209.3" y="199.4" width="5" height="26.5" fill="#e6193a"/>
<line x1="218.5" y1="195.5" x2="218.5" y2="218.52" stroke="#3a1c3a" stroke-width="1"/>
<rect x="216.0" y="218.5" width="5" height="26.5" fill="#e6193a"/>
<line x1="225.2" y1="214.7" x2="225.2" y2="237.69" stroke="#3a1c3a" stroke-width="1"/>
<rect x="222.7" y="237.7" width="5" height="26.5" fill="#e6193a"/>
<line x1="231.8" y1="245.0" x2="231.8" y2="268.0" stroke="#2a3e2a" stroke-width="1"/>
<rect x="229.3" y="218.5" width="5" height="26.5" fill="#28ee28"/>
<line x1="238.5" y1="214.7" x2="238.5" y2="237.69" stroke="#3a1c3a" stroke-width="1"/>
<rect x="236.0" y="237.7" width="5" height="26.5" fill="#e6193a"/>
<line x1="245.2" y1="233.9" x2="245.2" y2="256.86" stroke="#3a1c3a" stroke-width="1"/>
<rect x="242.7" y="256.9" width="5" height="26.5" fill="#e6193a"/>
<line x1="251.8" y1="253.0" x2="251.8" y2="276.03000000000003" stroke="#3a1c3a" stroke-width="1"/>
<rect x="249.3" y="276.0" width="5" height="26.5" fill="#e6193a"/>
<line x1="258.5" y1="283.4" x2="258.5" y2="306.4" stroke="#2a3e2a" stroke-width="1"/>
<rect x="256.0" y="256.9" width="5" height="26.5" fill="#28ee28"/>
<line x1="265.2" y1="264.2" x2="265.2" y2="287.2" stroke="#2a3e2a" stroke-width="1"/>
<rect x="262.7" y="237.7" width="5" height="26.5" fill="#28ee28"/>
<line x1="271.9" y1="233.9" x2="271.9" y2="256.86" stroke="#3a1c3a" stroke-width="1"/>
<rect x="269.4" y="256.9" width="5" height="26.5" fill="#e6193a"/>
<line x1="278.5" y1="253.0" x2="278.5" y2="276.03000000000003" stroke="#3a1c3a" stroke-width="1"/>
<rect x="276.0" y="276.0" width="5" height="26.5" fill="#e6193a"/>
<line x1="285.2" y1="283.4" x2="285.2" y2="306.4" stroke="#2a3e2a" stroke-width="1"/>
<rect x="282.7" y="256.9" width="5" height="26.5" fill="#28ee28"/>
<line x1="291.9" y1="253.0" x2="291.9" y2="276.03000000000003" stroke="#3a1c3a" stroke-width="1"/>
<rect x="289.4" y="276.0" width="5" height="26.5" fill="#e6193a"/>
<line x1="298.5" y1="283.4" x2="298.5" y2="306.4" stroke="#2a3e2a" stroke-width="1"/>
<rect x="296.0" y="256.9" width="5" height="26.5" fill="#28ee28"/>
<line x1="305.2" y1="264.2" x2="305.2" y2="287.2" stroke="#2a3e2a" stroke-width="1"/>
<rect x="302.7" y="237.7" width="5" height="26.5" fill="#28ee28"/>
<line x1="311.9" y1="233.9" x2="311.9" y2="256.86" stroke="#3a1c3a" stroke-width="1"/>
<rect x="309.4" y="256.9" width="5" height="26.5" fill="#e6193a"/>
<line x1="318.5" y1="253.0" x2="318.5" y2="276.03000000000003" stroke="#3a1c3a" stroke-width="1"/>
<rect x="316.0" y="276.0" width="5" height="26.5" fill="#e6193a"/>
<line x1="325.2" y1="272.2" x2="325.2" y2="295.20000000000005" stroke="#3a1c3a" stroke-width="1"/>
<rect x="322.7" y="295.2" width="5" height="26.5" fill="#e6193a"/>
<line x1="331.9" y1="291.4" x2="331.9" y2="314.37" stroke="#3a1c3a" stroke-width="1"/>
<rect x="329.4" y="314.4" width="5" height="26.5" fill="#e6193a"/>
<line x1="338.6" y1="310.5" x2="338.6" y2="333.54" stroke="#3a1c3a" stroke-width="1"/>
<rect x="336.1" y="333.5" width="5" height="26.5" fill="#e6193a"/>
<line x1="345.2" y1="329.7" x2="345.2" y2="352.71000000000004" stroke="#3a1c3a" stroke-width="1"/>
<rect x="342.7" y="352.7" width="5" height="26.5" fill="#e6193a"/>
<line x1="351.9" y1="348.9" x2="351.9" y2="371.88" stroke="#3a1c3a" stroke-width="1"/>
<rect x="349.4" y="371.9" width="5" height="26.5" fill="#e6193a"/>
<line x1="358.6" y1="368.1" x2="358.6" y2="391.05" stroke="#3a1c3a" stroke-width="1"/>
<rect x="356.1" y="391.1" width="5" height="26.5" fill="#e6193a"/>
<line x1="365.2" y1="387.2" x2="365.2" y2="410.22" stroke="#3a1c3a" stroke-width="1"/>
<rect x="362.7" y="410.2" width="5" height="26.5" fill="#e6193a"/>
<line x1="371.9" y1="417.6" x2="371.9" y2="440.6" stroke="#2a3e2a" stroke-width="1"/>
<rect x="369.4" y="391.1" width="5" height="26.5" fill="#28ee28"/>
<line x1="378.6" y1="398.4" x2="378.6" y2="421.4" stroke="#2a3e2a" stroke-width="1"/>
<rect x="376.1" y="371.9" width="5" height="26.5" fill="#28ee28"/>
<line x1="385.2" y1="379.2" x2="385.2" y2="402.2" stroke="#2a3e2a" stroke-width="1"/>
<rect x="382.8" y="352.7" width="5" height="26.5" fill="#28ee28"/>
<line x1="391.9" y1="348.9" x2="391.9" y2="371.88" stroke="#3a1c3a" stroke-width="1"/>
<rect x="389.4" y="371.9" width="5" height="26.5" fill="#e6193a"/>
<line x1="398.6" y1="368.1" x2="398.6" y2="391.05" stroke="#3a1c3a" stroke-width="1"/>
<rect x="396.1" y="391.1" width="5" height="26.5" fill="#e6193a"/>
<line x1="405.3" y1="387.2" x2="405.3" y2="410.22" stroke="#3a1c3a" stroke-width="1"/>
<rect x="402.8" y="410.2" width="5" height="26.5" fill="#e6193a"/>
<line x1="411.9" y1="406.4" x2="411.9" y2="429.39000000000004" stroke="#3a1c3a" stroke-width="1"/>
<rect x="409.4" y="429.4" width="5" height="26.5" fill="#e6193a"/>
<line x1="418.6" y1="425.6" x2="418.6" y2="448.56000000000006" stroke="#3a1c3a" stroke-width="1"/>
<rect x="416.1" y="448.6" width="5" height="26.5" fill="#e6193a"/>
<line x1="425.3" y1="455.9" x2="425.3" y2="478.9" stroke="#2a3e2a" stroke-width="1"/>
<rect x="422.8" y="429.4" width="5" height="26.5" fill="#28ee28"/>
<line x1="431.9" y1="425.6" x2="431.9" y2="448.56000000000006" stroke="#3a1c3a" stroke-width="1"/>
<rect x="429.4" y="448.6" width="5" height="26.5" fill="#e6193a"/>
<line x1="438.6" y1="455.9" x2="438.6" y2="478.9" stroke="#2a3e2a" stroke-width="1"/>
<rect x="436.1" y="429.4" width="5" height="26.5" fill="#28ee28"/>
<line x1="445.3" y1="425.6" x2="445.3" y2="448.56000000000006" stroke="#3a1c3a" stroke-width="1"/>
<rect x="442.8" y="448.6" width="5" height="26.5" fill="#e6193a"/>
<line x1="451.9" y1="444.7" x2="451.9" y2="467.73" stroke="#3a1c3a" stroke-width="1"/>
<rect x="449.4" y="467.7" width="5" height="26.5" fill="#e6193a"/>
<line x1="458.6" y1="475.1" x2="458.6" y2="498.1" stroke="#2a3e2a" stroke-width="1"/>
<rect x="456.1" y="448.6" width="5" height="26.5" fill="#28ee28"/>
<line x1="465.3" y1="444.7" x2="465.3" y2="467.73" stroke="#3a1c3a" stroke-width="1"/>
<rect x="462.8" y="467.7" width="5" height="26.5" fill="#e6193a"/>
<line x1="472.0" y1="463.9" x2="472.0" y2="486.90000000000003" stroke="#3a1c3a" stroke-width="1"/>
<rect x="469.5" y="486.9" width="5" height="26.5" fill="#e6193a"/>
<line x1="478.6" y1="494.2" x2="478.6" y2="517.2" stroke="#2a3e2a" stroke-width="1"/>
<rect x="476.1" y="467.7" width="5" height="26.5" fill="#28ee28"/>
<line x1="485.3" y1="475.1" x2="485.3" y2="498.1" stroke="#2a3e2a" stroke-width="1"/>
<rect x="482.8" y="448.6" width="5" height="26.5" fill="#28ee28"/>
<line x1="492.0" y1="455.9" x2="492.0" y2="478.9" stroke="#2a3e2a" stroke-width="1"/>
<rect x="489.5" y="429.4" width="5" height="26.5" fill="#28ee28"/>
<line x1="498.6" y1="425.6" x2="498.6" y2="448.56000000000006" stroke="#3a1c3a" stroke-width="1"/>
<rect x="496.1" y="448.6" width="5" height="26.5" fill="#e6193a"/>
<line x1="505.3" y1="444.7" x2="505.3" y2="467.73" stroke="#3a1c3a" stroke-width="1"/>
<rect x="502.8" y="467.7" width="5" height="26.5" fill="#e6193a"/>
<line x1="512.0" y1="463.9" x2="512.0" y2="486.90000000000003" stroke="#3a1c3a" stroke-width="1"/>
<rect x="509.5" y="486.9" width="5" height="26.5" fill="#e6193a"/>
<line x1="518.6" y1="494.2" x2="518.6" y2="517.2" stroke="#2a3e2a" stroke-width="1"/>
<rect x="516.1" y="467.7" width="5" height="26.5" fill="#28ee28"/>
<line x1="525.3" y1="475.1" x2="525.3" y2="498.1" stroke="#2a3e2a" stroke-width="1"/>
<rect x="522.8" y="448.6" width="5" height="26.5" fill="#28ee28"/>
<line x1="532.0" y1="444.7" x2="532.0" y2="467.73" stroke="#3a1c3a" stroke-width="1"/>
<rect x="529.5" y="467.7" width="5" height="26.5" fill="#e6193a"/>
<line x1="538.7" y1="475.1" x2="538.7" y2="498.1" stroke="#2a3e2a" stroke-width="1"/>
<rect x="536.2" y="448.6" width="5" height="26.5" fill="#28ee28"/>
<line x1="545.3" y1="455.9" x2="545.3" y2="478.9" stroke="#2a3e2a" stroke-width="1"/>
<rect x="542.8" y="429.4" width="5" height="26.5" fill="#28ee28"/>
<line x1="552.0" y1="425.6" x2="552.0" y2="448.56000000000006" stroke="#3a1c3a" stroke-width="1"/>
<rect x="549.5" y="448.6" width="5" height="26.5" fill="#e6193a"/>
<line x1="558.7" y1="455.9" x2="558.7" y2="478.9" stroke="#2a3e2a" stroke-width="1"/>
<rect x="556.2" y="429.4" width="5" height="26.5" fill="#28ee28"/>
<line x1="565.3" y1="436.7" x2="565.3" y2="459.7" stroke="#2a3e2a" stroke-width="1"/>
<rect x="562.8" y="410.2" width="5" height="26.5" fill="#28ee28"/>
<line x1="572.0" y1="406.4" x2="572.0" y2="429.39000000000004" stroke="#3a1c3a" stroke-width="1"/>
<rect x="569.5" y="429.4" width="5" height="26.5" fill="#e6193a"/>
<line x1="578.7" y1="436.7" x2="578.7" y2="459.7" stroke="#2a3e2a" stroke-width="1"/>
<rect x="576.2" y="410.2" width="5" height="26.5" fill="#28ee28"/>
<line x1="585.3" y1="417.6" x2="585.3" y2="440.6" stroke="#2a3e2a" stroke-width="1"/>
<rect x="582.8" y="391.1" width="5" height="26.5" fill="#28ee28"/>
<line x1="592.0" y1="398.4" x2="592.0" y2="421.4" stroke="#2a3e2a" stroke-width="1"/>
<rect x="589.5" y="371.9" width="5" height="26.5" fill="#28ee28"/>
<line x1="598.7" y1="379.2" x2="598.7" y2="402.2" stroke="#2a3e2a" stroke-width="1"/>
<rect x="596.2" y="352.7" width="5" height="26.5" fill="#28ee28"/>
<line x1="605.4" y1="360.0" x2="605.4" y2="383.0" stroke="#2a3e2a" stroke-width="1"/>
<rect x="602.9" y="333.5" width="5" height="26.5" fill="#28ee28"/>
<line x1="612.0" y1="340.9" x2="612.0" y2="363.9" stroke="#2a3e2a" stroke-width="1"/>
<rect x="609.5" y="314.4" width="5" height="26.5" fill="#28ee28"/>
<line x1="618.7" y1="310.5" x2="618.7" y2="333.54" stroke="#3a1c3a" stroke-width="1"/>
<rect x="616.2" y="333.5" width="5" height="26.5" fill="#e6193a"/>
<line x1="625.4" y1="340.9" x2="625.4" y2="363.9" stroke="#2a3e2a" stroke-width="1"/>
<rect x="622.9" y="314.4" width="5" height="26.5" fill="#28ee28"/>
<line x1="632.0" y1="321.7" x2="632.0" y2="344.7" stroke="#2a3e2a" stroke-width="1"/>
<rect x="629.5" y="295.2" width="5" height="26.5" fill="#28ee28"/>
<line x1="638.7" y1="302.5" x2="638.7" y2="325.5" stroke="#2a3e2a" stroke-width="1"/>
<rect x="636.2" y="276.0" width="5" height="26.5" fill="#28ee28"/>
<line x1="645.4" y1="272.2" x2="645.4" y2="295.20000000000005" stroke="#3a1c3a" stroke-width="1"/>
<rect x="642.9" y="295.2" width="5" height="26.5" fill="#e6193a"/>
<line x1="652.0" y1="291.4" x2="652.0" y2="314.37" stroke="#3a1c3a" stroke-width="1"/>
<rect x="649.5" y="314.4" width="5" height="26.5" fill="#e6193a"/>
<line x1="658.7" y1="310.5" x2="658.7" y2="333.54" stroke="#3a1c3a" stroke-width="1"/>
<rect x="656.2" y="333.5" width="5" height="26.5" fill="#e6193a"/>
<line x1="665.4" y1="329.7" x2="665.4" y2="352.71000000000004" stroke="#3a1c3a" stroke-width="1"/>
<rect x="662.9" y="352.7" width="5" height="26.5" fill="#e6193a"/>
<line x1="672.1" y1="348.9" x2="672.1" y2="371.88" stroke="#3a1c3a" stroke-width="1"/>
<rect x="669.6" y="371.9" width="5" height="26.5" fill="#e6193a"/>
<line x1="678.7" y1="368.1" x2="678.7" y2="391.05" stroke="#3a1c3a" stroke-width="1"/>
<rect x="676.2" y="391.1" width="5" height="26.5" fill="#e6193a"/>
<line x1="685.4" y1="387.2" x2="685.4" y2="410.22" stroke="#3a1c3a" stroke-width="1"/>
<rect x="682.9" y="410.2" width="5" height="26.5" fill="#e6193a"/>
<line x1="692.1" y1="406.4" x2="692.1" y2="429.39000000000004" stroke="#3a1c3a" stroke-width="1"/>
<rect x="689.6" y="429.4" width="5" height="26.5" fill="#e6193a"/>
<line x1="698.7" y1="436.7" x2="698.7" y2="459.7" stroke="#2a3e2a" stroke-width="1"/>
<rect x="696.2" y="410.2" width="5" height="26.5" fill="#28ee28"/>
<line x1="705.4" y1="417.6" x2="705.4" y2="440.6" stroke="#2a3e2a" stroke-width="1"/>
<rect x="702.9" y="391.1" width="5" height="26.5" fill="#28ee28"/>
<line x1="712.1" y1="398.4" x2="712.1" y2="421.4" stroke="#2a3e2a" stroke-width="1"/>
<rect x="709.6" y="371.9" width="5" height="26.5" fill="#28ee28"/>
<line x1="718.8" y1="379.2" x2="718.8" y2="402.2" stroke="#2a3e2a" stroke-width="1"/>
<rect x="716.2" y="352.7" width="5" height="26.5" fill="#28ee28"/>
<line x1="725.4" y1="348.9" x2="725.4" y2="371.88" stroke="#3a1c3a" stroke-width="1"/>
<rect x="722.9" y="371.9" width="5" height="26.5" fill="#e6193a"/>
<line x1="732.1" y1="368.1" x2="732.1" y2="391.05" stroke="#3a1c3a" stroke-width="1"/>
<rect x="729.6" y="391.1" width="5" height="26.5" fill="#e6193a"/>
<line x1="738.8" y1="387.2" x2="738.8" y2="410.22" stroke="#3a1c3a" stroke-width="1"/>
<rect x="736.3" y="410.2" width="5" height="26.5" fill="#e6193a"/>
<line x1="745.4" y1="406.4" x2="745.4" y2="429.39000000000004" stroke="#3a1c3a" stroke-width="1"/>
<rect x="742.9" y="429.4" width="5" height="26.5" fill="#e6193a"/>
<line x1="752.1" y1="425.6" x2="752.1" y2="448.56000000000006" stroke="#3a1c3a" stroke-width="1"/>
<rect x="749.6" y="448.6" width="5" height="26.5" fill="#e6193a"/>
<line x1="758.8" y1="455.9" x2="758.8" y2="478.9" stroke="#2a3e2a" stroke-width="1"/>
<rect x="756.3" y="429.4" width="5" height="26.5" fill="#28ee28"/>
<line x1="765.4" y1="436.7" x2="765.4" y2="459.7" stroke="#2a3e2a" stroke-width="1"/>
<rect x="762.9" y="410.2" width="5" height="26.5" fill="#28ee28"/>
<line x1="772.1" y1="417.6" x2="772.1" y2="440.6" stroke="#2a3e2a" stroke-width="1"/>
<rect x="769.6" y="391.1" width="5" height="26.5" fill="#28ee28"/>
<line x1="145.1" y1="296" x2="145.1" y2="301" stroke="#b8a898" stroke-width="1.2"/>
<line x1="151.8" y1="292" x2="151.8" y2="307" stroke="#b8a898" stroke-width="1.2"/>
<line x1="158.5" y1="289" x2="158.5" y2="307" stroke="#b8a898" stroke-width="1.2"/>
<line x1="165.1" y1="290" x2="165.1" y2="307" stroke="#b8a898" stroke-width="1.2"/>
<line x1="171.8" y1="296" x2="171.8" y2="307" stroke="#b8a898" stroke-width="1.2"/>
<line x1="178.5" y1="306" x2="178.5" y2="310" stroke="#b8a898" stroke-width="1.2"/>
<line x1="185.1" y1="319" x2="185.1" y2="322" stroke="#b8a898" stroke-width="1.2"/>
<line x1="191.8" y1="328" x2="191.8" y2="336" stroke="#b8a898" stroke-width="1.2"/>
<line x1="198.5" y1="335" x2="198.5" y2="352" stroke="#b8a898" stroke-width="1.2"/>
<line x1="205.2" y1="335" x2="205.2" y2="354" stroke="#b8a898" stroke-width="1.2"/>
<line x1="211.8" y1="335" x2="211.8" y2="355" stroke="#b8a898" stroke-width="1.2"/>
<line x1="218.5" y1="335" x2="218.5" y2="361" stroke="#b8a898" stroke-width="1.2"/>
<line x1="225.2" y1="335" x2="225.2" y2="361" stroke="#b8a898" stroke-width="1.2"/>
<line x1="231.8" y1="335" x2="231.8" y2="361" stroke="#b8a898" stroke-width="1.2"/>
<line x1="238.5" y1="335" x2="238.5" y2="361" stroke="#b8a898" stroke-width="1.2"/>
<line x1="245.2" y1="335" x2="245.2" y2="358" stroke="#b8a898" stroke-width="1.2"/>
<line x1="251.8" y1="335" x2="251.8" y2="349" stroke="#b8a898" stroke-width="1.2"/>
<line x1="258.5" y1="335" x2="258.5" y2="340" stroke="#b8a898" stroke-width="1.2"/>
<line x1="265.2" y1="322" x2="265.2" y2="335" stroke="#b8a898" stroke-width="1.2"/>
<line x1="271.9" y1="318" x2="271.9" y2="335" stroke="#b8a898" stroke-width="1.2"/>
<line x1="278.5" y1="316" x2="278.5" y2="335" stroke="#b8a898" stroke-width="1.2"/>
<line x1="285.2" y1="313" x2="285.2" y2="335" stroke="#b8a898" stroke-width="1.2"/>
<line x1="291.9" y1="275" x2="291.9" y2="310" stroke="#b8a898" stroke-width="1.2"/>
<line x1="298.5" y1="272" x2="298.5" y2="305" stroke="#b8a898" stroke-width="1.2"/>
<line x1="305.2" y1="265" x2="305.2" y2="300" stroke="#b8a898" stroke-width="1.2"/>
<line x1="311.9" y1="250" x2="311.9" y2="293" stroke="#b8a898" stroke-width="1.2"/>
<line x1="318.5" y1="248" x2="318.5" y2="287" stroke="#b8a898" stroke-width="1.2"/>
<line x1="325.2" y1="239" x2="325.2" y2="280" stroke="#b8a898" stroke-width="1.2"/>
<line x1="331.9" y1="238" x2="331.9" y2="279" stroke="#b8a898" stroke-width="1.2"/>
<line x1="338.6" y1="229" x2="338.6" y2="279" stroke="#b8a898" stroke-width="1.2"/>
<line x1="345.2" y1="221" x2="345.2" y2="279" stroke="#b8a898" stroke-width="1.2"/>
<line x1="351.9" y1="214" x2="351.9" y2="276" stroke="#b8a898" stroke-width="1.2"/>
<line x1="358.6" y1="210" x2="358.6" y2="274" stroke="#b8a898" stroke-width="1.2"/>
<line x1="365.2" y1="209" x2="365.2" y2="274" stroke="#b8a898" stroke-width="1.2"/>
<line x1="371.9" y1="198" x2="371.9" y2="274" stroke="#b8a898" stroke-width="1.2"/>
<line x1="378.6" y1="193" x2="378.6" y2="274" stroke="#b8a898" stroke-width="1.2"/>
<line x1="385.2" y1="194" x2="385.2" y2="274" stroke="#b8a898" stroke-width="1.2"/>
<line x1="391.9" y1="198" x2="391.9" y2="274" stroke="#b8a898" stroke-width="1.2"/>
<line x1="398.6" y1="203" x2="398.6" y2="274" stroke="#b8a898" stroke-width="1.2"/>
<line x1="405.3" y1="203" x2="405.3" y2="274" stroke="#b8a898" stroke-width="1.2"/>
<line x1="411.9" y1="193" x2="411.9" y2="274" stroke="#b8a898" stroke-width="1.2"/>
<line x1="418.6" y1="202" x2="418.6" y2="274" stroke="#b8a898" stroke-width="1.2"/>
<line x1="425.3" y1="208" x2="425.3" y2="274" stroke="#b8a898" stroke-width="1.2"/>
<line x1="431.9" y1="211" x2="431.9" y2="274" stroke="#b8a898" stroke-width="1.2"/>
<line x1="438.6" y1="216" x2="438.6" y2="274" stroke="#b8a898" stroke-width="1.2"/>
<line x1="445.3" y1="221" x2="445.3" y2="274" stroke="#b8a898" stroke-width="1.2"/>
<line x1="451.9" y1="228" x2="451.9" y2="274" stroke="#b8a898" stroke-width="1.2"/>
<line x1="458.6" y1="234" x2="458.6" y2="274" stroke="#b8a898" stroke-width="1.2"/>
<line x1="465.3" y1="234" x2="465.3" y2="274" stroke="#b8a898" stroke-width="1.2"/>
<line x1="472.0" y1="234" x2="472.0" y2="274" stroke="#b8a898" stroke-width="1.2"/>
<line x1="478.6" y1="234" x2="478.6" y2="274" stroke="#b8a898" stroke-width="1.2"/>
<line x1="485.3" y1="234" x2="485.3" y2="274" stroke="#b8a898" stroke-width="1.2"/>
<line x1="492.0" y1="234" x2="492.0" y2="274" stroke="#b8a898" stroke-width="1.2"/>
<line x1="498.6" y1="238" x2="498.6" y2="274" stroke="#b8a898" stroke-width="1.2"/>
<line x1="505.3" y1="248" x2="505.3" y2="274" stroke="#b8a898" stroke-width="1.2"/>
<line x1="512.0" y1="258" x2="512.0" y2="274" stroke="#b8a898" stroke-width="1.2"/>
<line x1="518.6" y1="267" x2="518.6" y2="274" stroke="#b8a898" stroke-width="1.2"/>
<line x1="525.3" y1="273" x2="525.3" y2="278" stroke="#b4b4b4" stroke-width="1.2"/>
<line x1="532.0" y1="273" x2="532.0" y2="290" stroke="#b4b4b4" stroke-width="1.2"/>
<line x1="538.7" y1="273" x2="538.7" y2="305" stroke="#b4b4b4" stroke-width="1.2"/>
<line x1="545.3" y1="268" x2="545.3" y2="318" stroke="#b4b4b4" stroke-width="1.2"/>
<line x1="552.0" y1="267.5" x2="552.0" y2="332" stroke="#b4b4b4" stroke-width="1.2"/>
<line x1="558.7" y1="267.5" x2="558.7" y2="344" stroke="#b4b4b4" stroke-width="1.2"/>
<line x1="565.3" y1="267.5" x2="565.3" y2="352" stroke="#b4b4b4" stroke-width="1.2"/>
<line x1="572.0" y1="267.5" x2="572.0" y2="354" stroke="#b4b4b4" stroke-width="1.2"/>
<line x1="578.7" y1="267.5" x2="578.7" y2="355" stroke="#b4b4b4" stroke-width="1.2"/>
<line x1="585.3" y1="275" x2="585.3" y2="362" stroke="#b4b4b4" stroke-width="1.2"/>
<line x1="592.0" y1="285" x2="592.0" y2="372" stroke="#b4b4b4" stroke-width="1.2"/>
<line x1="598.7" y1="285" x2="598.7" y2="380" stroke="#b4b4b4" stroke-width="1.2"/>
<line x1="605.4" y1="285" x2="605.4" y2="381" stroke="#b4b4b4" stroke-width="1.2"/>
<line x1="612.0" y1="286" x2="612.0" y2="382" stroke="#b4b4b4" stroke-width="1.2"/>
<line x1="618.7" y1="286" x2="618.7" y2="382" stroke="#b4b4b4" stroke-width="1.2"/>
<line x1="625.4" y1="292" x2="625.4" y2="385" stroke="#b4b4b4" stroke-width="1.2"/>
<line x1="632.0" y1="293" x2="632.0" y2="398" stroke="#b4b4b4" stroke-width="1.2"/>
<line x1="638.7" y1="296" x2="638.7" y2="410" stroke="#b4b4b4" stroke-width="1.2"/>
<line x1="645.4" y1="302" x2="645.4" y2="419" stroke="#b4b4b4" stroke-width="1.2"/>
<line x1="652.0" y1="305" x2="652.0" y2="422" stroke="#b4b4b4" stroke-width="1.2"/>
<line x1="658.7" y1="305" x2="658.7" y2="430" stroke="#b4b4b4" stroke-width="1.2"/>
<line x1="665.4" y1="305" x2="665.4" y2="440" stroke="#b4b4b4" stroke-width="1.2"/>
<line x1="672.1" y1="305" x2="672.1" y2="445" stroke="#b4b4b4" stroke-width="1.2"/>
<line x1="678.7" y1="305" x2="678.7" y2="446" stroke="#b4b4b4" stroke-width="1.2"/>
<line x1="685.4" y1="305" x2="685.4" y2="446" stroke="#b4b4b4" stroke-width="1.2"/>
<line x1="692.1" y1="309" x2="692.1" y2="458" stroke="#b4b4b4" stroke-width="1.2"/>
<line x1="698.7" y1="312" x2="698.7" y2="458" stroke="#b4b4b4" stroke-width="1.2"/>
<line x1="705.4" y1="325" x2="705.4" y2="458" stroke="#b4b4b4" stroke-width="1.2"/>
<line x1="712.1" y1="332" x2="712.1" y2="458" stroke="#b4b4b4" stroke-width="1.2"/>
<line x1="718.8" y1="339" x2="718.8" y2="458" stroke="#b4b4b4" stroke-width="1.2"/>
<line x1="725.4" y1="346" x2="725.4" y2="458" stroke="#b4b4b4" stroke-width="1.2"/>
<line x1="732.1" y1="357" x2="732.1" y2="458" stroke="#b4b4b4" stroke-width="1.2"/>
<line x1="738.8" y1="370" x2="738.8" y2="458" stroke="#b4b4b4" stroke-width="1.2"/>
<line x1="745.4" y1="372" x2="745.4" y2="460" stroke="#b4b4b4" stroke-width="1.2"/>
<line x1="752.1" y1="372" x2="752.1" y2="450" stroke="#b4b4b4" stroke-width="1.2"/>
<line x1="758.8" y1="372" x2="758.8" y2="440" stroke="#b4b4b4" stroke-width="1.2"/>
<line x1="765.4" y1="372" x2="765.4" y2="438" stroke="#b4b4b4" stroke-width="1.2"/>
<line x1="772.1" y1="372" x2="772.1" y2="430" stroke="#b4b4b4" stroke-width="1.2"/>
<polyline points="145.1,296.0 151.8,292.0 158.5,289.0 165.1,290.0 171.8,296.0 178.5,306.0 185.1,319.0 191.8,328.0 198.5,335.0 205.2,335.0 211.8,335.0 218.5,335.0 225.2,335.0 231.8,335.0 238.5,335.0 245.2,335.0 251.8,335.0 258.5,335.0 265.2,322.0 271.9,318.0 278.5,316.0 285.2,313.0 291.9,275.0 298.5,272.0 305.2,265.0 311.9,250.0 318.5,248.0 325.2,239.0 331.9,238.0 338.6,229.0 345.2,221.0 351.9,214.0 358.6,210.0 365.2,209.0 371.9,198.0 378.6,193.0 385.2,194.0 391.9,198.0 398.6,203.0 405.3,203.0 411.9,193.0 418.6,202.0 425.3,208.0 431.9,211.0 438.6,216.0 445.3,221.0 451.9,228.0 458.6,234.0 465.3,234.0 472.0,234.0 478.6,234.0 485.3,234.0 492.0,234.0 498.6,238.0 505.3,248.0 512.0,258.0 518.6,267.0 525.3,273.0 532.0,273.0 538.7,273.0 545.3,268.0 552.0,267.5 558.7,267.5 565.3,267.5 572.0,267.5 578.7,267.5 585.3,275.0 592.0,285.0 598.7,285.0 605.4,285.0 612.0,286.0 618.7,286.0 625.4,292.0 632.0,293.0 638.7,296.0 645.4,302.0 652.0,305.0 658.7,305.0 665.4,305.0 672.1,305.0 678.7,305.0 685.4,305.0 692.1,309.0 698.7,312.0 705.4,325.0 712.1,332.0 718.8,339.0 725.4,346.0 732.1,357.0 738.8,370.0 745.4,372.0 752.1,372.0 758.8,372.0 765.4,372.0 772.1,372.0" fill="none" stroke="#c8c0b8" stroke-width="1" stroke-dasharray="1.5,1.5"/>
<polyline points="145.1,301.0 151.8,307.0 158.5,307.0 165.1,307.0 171.8,307.0 178.5,310.0 185.1,322.0 191.8,336.0 198.5,352.0 205.2,354.0 211.8,355.0 218.5,361.0 225.2,361.0 231.8,361.0 238.5,361.0 245.2,358.0 251.8,349.0 258.5,340.0 265.2,335.0 271.9,335.0 278.5,335.0 285.2,335.0 291.9,310.0 298.5,305.0 305.2,300.0 311.9,293.0 318.5,287.0 325.2,280.0 331.9,279.0 338.6,279.0 345.2,279.0 351.9,276.0 358.6,274.0 365.2,274.0 371.9,274.0 378.6,274.0 385.2,274.0 391.9,274.0 398.6,274.0 405.3,274.0 411.9,274.0 418.6,274.0 425.3,274.0 431.9,274.0 438.6,274.0 445.3,274.0 451.9,274.0 458.6,274.0 465.3,274.0 472.0,274.0 478.6,274.0 485.3,274.0 492.0,274.0 498.6,274.0 505.3,274.0 512.0,274.0 518.6,274.0 525.3,278.0 532.0,290.0 538.7,305.0 545.3,318.0 552.0,332.0 558.7,344.0 565.3,352.0 572.0,354.0 578.7,355.0 585.3,362.0 592.0,372.0 598.7,380.0 605.4,381.0 612.0,382.0 618.7,382.0 625.4,385.0 632.0,398.0 638.7,410.0 645.4,419.0 652.0,422.0 658.7,430.0 665.4,440.0 672.1,445.0 678.7,446.0 685.4,446.0 692.1,458.0 698.7,458.0 705.4,458.0 712.1,458.0 718.8,458.0 725.4,458.0 732.1,458.0 738.8,458.0 745.4,460.0 752.1,450.0 758.8,440.0 765.4,438.0 772.1,430.0" fill="none" stroke="#c8c0b8" stroke-width="1" stroke-dasharray="1.5,1.5"/>
<polyline points="145.0,280.0 187.5,273.8 193.8,260.0 200.0,242.5 207.5,230.0 215.0,225.0 222.0,215.0 235.0,200.0 245.0,197.5 280.0,197.5 285.0,202.5 320.0,202.5 330.0,208.0 336.0,216.0 358.0,276.0 380.0,310.0 390.0,329.0 404.0,331.0 412.0,345.0 420.0,350.0 440.0,347.0 450.0,356.7 463.0,356.7 473.0,366.7 490.0,396.7 498.0,415.0 513.0,416.0 519.0,438.0 557.0,438.0 580.0,446.0 605.0,420.0 618.0,411.0 632.0,411.0 637.0,396.0 700.0,396.0 722.0,372.0 734.0,367.0 773.0,369.0" fill="none" stroke="#121250" stroke-width="1.5"/>
<polyline points="145.0,205.0 151.7,197.5 158.3,196.7 165.0,180.0 173.3,160.0 180.0,150.0 190.0,138.0 200.0,143.0 212.0,165.0 225.0,178.8 240.0,178.8 247.5,205.0 257.5,225.0 272.5,250.0 280.0,260.0 290.0,267.5 310.0,266.0 336.0,287.5 349.5,305.5 366.0,328.0 375.5,350.0 380.0,369.5 403.0,394.5 412.0,405.0 419.5,414.7 442.0,415.5 449.5,427.0 464.0,459.0 476.0,474.0 509.0,474.5 515.0,478.0 560.0,478.5 590.0,435.0 615.5,390.0 632.0,375.0 643.0,333.0 656.0,320.0 665.0,322.5 676.0,340.0 700.0,380.0 720.0,400.0 740.0,404.0 773.0,414.0" fill="none" stroke="#5c1a1a" stroke-width="1.1"/>
<polyline points="145.7,301.5 191.7,435.6 199.4,387.7 211.0,355.0 218.5,401.0 245.4,474.0 251.0,431.8 258.8,474.0 264.5,430.0 278.0,493.0 284.8,449.0 297.0,512.0 318.0,430.0 338.0,511.0 350.4,451.0 358.7,492.5 375.4,426.0 379.6,471.7 392.0,411.0 399.0,455.0 438.0,315.4 445.0,359.0 465.0,277.0 471.7,320.0 518.3,454.0 533.0,390.0 545.5,351.4 551.0,390.0 578.0,474.0 599.0,390.0 620.0,372.0 651.0,447.0 659.0,418.0 666.0,447.0 712.6,329.0 771.3,161.0" fill="none" stroke="#3a6e3a" stroke-width="1.2"/>
<polyline points="130.0,215.0 184.8,93.0 285.0,312.0 312.0,218.8 518.3,527.0 645.3,265.3 759.0,479.7 790.0,420.0" fill="none" stroke="#f0ee88" stroke-width="1.7" stroke-linejoin="miter"/>
</g>
<rect x="144.5" y="70.5" width="628.5" height="467" fill="none" stroke="#b4b4b4" stroke-width="1"/>
<rect x="144" y="537" width="629" height="3" fill="#a0a0a0"/>
<rect x="144.5" y="539.5" width="628.5" height="18" fill="none" stroke="#b4b4b4" stroke-width="1"/>
<g clip-path="url(#cp2)">
<polygon points="145.0,550.0 152.0,553.0 164.0,552.0 180.0,550.0 192.0,549.0 204.0,546.0 216.0,542.0 228.0,541.0 248.0,542.0 260.0,544.0 272.0,545.0 284.0,544.4 300.0,545.0 318.0,542.0 333.0,545.6 345.0,542.0 360.0,545.0 372.0,544.4 384.0,549.5 399.0,551.0 411.0,557.0 420.0,557.0 435.0,553.4 450.0,554.0 465.0,551.0 480.0,549.5 492.0,554.0 510.0,551.0 528.0,547.4 540.0,546.5 558.0,545.0 579.0,541.4 594.0,543.5 612.0,547.0 627.0,546.5 639.0,548.6 654.0,551.0 672.0,551.0 690.0,549.5 708.0,551.0 720.0,549.5 735.0,546.5 750.0,544.4 768.0,545.0 773.0,544.0 773,557 145,557" fill="#04060e"/>
<polyline points="145.0,550.0 152.0,553.0 164.0,552.0 180.0,550.0 192.0,549.0 204.0,546.0 216.0,542.0 228.0,541.0 248.0,542.0 260.0,544.0 272.0,545.0 284.0,544.4 300.0,545.0 318.0,542.0 333.0,545.6 345.0,542.0 360.0,545.0 372.0,544.4 384.0,549.5 399.0,551.0 411.0,557.0 420.0,557.0 435.0,553.4 450.0,554.0 465.0,551.0 480.0,549.5 492.0,554.0 510.0,551.0 528.0,547.4 540.0,546.5 558.0,545.0 579.0,541.4 594.0,543.5 612.0,547.0 627.0,546.5 639.0,548.6 654.0,551.0 672.0,551.0 690.0,549.5 708.0,551.0 720.0,549.5 735.0,546.5 750.0,544.4 768.0,545.0 773.0,544.0" fill="none" stroke="#7d8fb4" stroke-width="1"/>
</g>
<line x1="773" y1="72.0" x2="776" y2="72.0" stroke="#b4b4b4" stroke-width="1"/>
<text x="777" y="75.5" font-family="Liberation Sans" font-size="10" fill="#e0e0e0" textLength="19.5" lengthAdjust="spacingAndGlyphs">1.15260</text>
<line x1="773" y1="109.5" x2="776" y2="109.5" stroke="#b4b4b4" stroke-width="1"/>
<text x="777" y="113.0" font-family="Liberation Sans" font-size="10" fill="#e0e0e0" textLength="19.5" lengthAdjust="spacingAndGlyphs">1.14520</text>
<line x1="773" y1="147.0" x2="776" y2="147.0" stroke="#b4b4b4" stroke-width="1"/>
<text x="777" y="150.5" font-family="Liberation Sans" font-size="10" fill="#e0e0e0" textLength="19.5" lengthAdjust="spacingAndGlyphs">1.13790</text>
<line x1="773" y1="184.5" x2="776" y2="184.5" stroke="#b4b4b4" stroke-width="1"/>
<text x="777" y="188.0" font-family="Liberation Sans" font-size="10" fill="#e0e0e0" textLength="19.5" lengthAdjust="spacingAndGlyphs">1.13050</text>
<line x1="773" y1="222.0" x2="776" y2="222.0" stroke="#b4b4b4" stroke-width="1"/>
<text x="777" y="225.5" font-family="Liberation Sans" font-size="10" fill="#e0e0e0" textLength="19.5" lengthAdjust="spacingAndGlyphs">1.12310</text>
<line x1="773" y1="259.5" x2="776" y2="259.5" stroke="#b4b4b4" stroke-width="1"/>
<text x="777" y="263.0" font-family="Liberation Sans" font-size="10" fill="#e0e0e0" textLength="19.5" lengthAdjust="spacingAndGlyphs">1.11570</text>
<line x1="773" y1="297.0" x2="776" y2="297.0" stroke="#b4b4b4" stroke-width="1"/>
<text x="777" y="300.5" font-family="Liberation Sans" font-size="10" fill="#e0e0e0" textLength="19.5" lengthAdjust="spacingAndGlyphs">1.10840</text>
<line x1="773" y1="334.5" x2="776" y2="334.5" stroke="#b4b4b4" stroke-width="1"/>
<text x="777" y="338.0" font-family="Liberation Sans" font-size="10" fill="#e0e0e0" textLength="19.5" lengthAdjust="spacingAndGlyphs">1.10100</text>
<line x1="773" y1="372.0" x2="776" y2="372.0" stroke="#b4b4b4" stroke-width="1"/>
<text x="777" y="375.5" font-family="Liberation Sans" font-size="10" fill="#e0e0e0" textLength="19.5" lengthAdjust="spacingAndGlyphs">1.09360</text>
<line x1="773" y1="409.5" x2="776" y2="409.5" stroke="#b4b4b4" stroke-width="1"/>
<text x="777" y="413.0" font-family="Liberation Sans" font-size="10" fill="#e0e0e0" textLength="19.5" lengthAdjust="spacingAndGlyphs">1.08630</text>
<line x1="773" y1="447.0" x2="776" y2="447.0" stroke="#b4b4b4" stroke-width="1"/>
<text x="777" y="450.5" font-family="Liberation Sans" font-size="10" fill="#e0e0e0" textLength="19.5" lengthAdjust="spacingAndGlyphs">1.07890</text>
<line x1="773" y1="484.5" x2="776" y2="484.5" stroke="#b4b4b4" stroke-width="1"/>
<text x="777" y="488.0" font-family="Liberation Sans" font-size="10" fill="#e0e0e0" textLength="19.5" lengthAdjust="spacingAndGlyphs">1.07150</text>
<line x1="773" y1="522.0" x2="776" y2="522.0" stroke="#b4b4b4" stroke-width="1"/>
<text x="777" y="525.5" font-family="Liberation Sans" font-size="10" fill="#e0e0e0" textLength="19.5" lengthAdjust="spacingAndGlyphs">1.06420</text>
<text x="776" y="549.5" font-family="Liberation Sans" font-size="10" fill="#e0e0e0" textLength="21" lengthAdjust="spacingAndGlyphs">0.00916</text>
<text x="776" y="557.5" font-family="Liberation Sans" font-size="10" fill="#e0e0e0" textLength="21" lengthAdjust="spacingAndGlyphs">0.00671</text>
<polygon points="146,76 151,76 148.5,80" fill="#e8e8e8"/>
<text x="152" y="81.5" font-family="Liberation Sans" font-size="10" fill="#d8d8d8" textLength="28" lengthAdjust="spacingAndGlyphs">EURUSD,M2</text>
<text x="184" y="81.5" font-family="Liberation Sans" font-size="10" fill="#dcdcdc" textLength="80.5" lengthAdjust="spacingAndGlyphs">1.17875 1.18548 1.17807 1.18197</text>
<text x="146" y="552" font-family="Liberation Sans" font-size="9.5" fill="#d8d8d8" textLength="41" lengthAdjust="spacingAndGlyphs">ATR(14) 0.00822</text>
<text x="145.5" y="570" font-family="Liberation Sans" font-size="10" fill="#e0e0e0" textLength="25" lengthAdjust="spacingAndGlyphs">8 Mar 2020</text>
<line x1="184.5" y1="557" x2="184.5" y2="560" stroke="#b4b4b4" stroke-width="1"/>
<text x="185.0" y="570" font-family="Liberation Sans" font-size="10" fill="#e0e0e0" textLength="27" lengthAdjust="spacingAndGlyphs">9 Mar 13:00</text>
<line x1="224.5" y1="557" x2="224.5" y2="560" stroke="#b4b4b4" stroke-width="1"/>
<text x="225.0" y="570" font-family="Liberation Sans" font-size="10" fill="#e0e0e0" textLength="30" lengthAdjust="spacingAndGlyphs">12 Mar 14:00</text>
<line x1="265.0" y1="557" x2="265.0" y2="560" stroke="#b4b4b4" stroke-width="1"/>
<text x="265.5" y="570" font-family="Liberation Sans" font-size="10" fill="#e0e0e0" textLength="30" lengthAdjust="spacingAndGlyphs">12 Mar 16:30</text>
<line x1="304.7" y1="557" x2="304.7" y2="560" stroke="#b4b4b4" stroke-width="1"/>
<text x="305.2" y="570" font-family="Liberation Sans" font-size="10" fill="#e0e0e0" textLength="30" lengthAdjust="spacingAndGlyphs">15 Mar 21:30</text>
<line x1="345.0" y1="557" x2="345.0" y2="560" stroke="#b4b4b4" stroke-width="1"/>
<text x="345.5" y="570" font-family="Liberation Sans" font-size="10" fill="#e0e0e0" textLength="30" lengthAdjust="spacingAndGlyphs">17 Mar 14:00</text>
<line x1="384.0" y1="557" x2="384.0" y2="560" stroke="#b4b4b4" stroke-width="1"/>
<text x="384.5" y="570" font-family="Liberation Sans" font-size="10" fill="#e0e0e0" textLength="30" lengthAdjust="spacingAndGlyphs">18 Mar 23:00</text>
<line x1="425.0" y1="557" x2="425.0" y2="560" stroke="#b4b4b4" stroke-width="1"/>
<text x="425.5" y="570" font-family="Liberation Sans" font-size="10" fill="#e0e0e0" textLength="30" lengthAdjust="spacingAndGlyphs">19 Mar 11:30</text>
<line x1="464.0" y1="557" x2="464.0" y2="560" stroke="#b4b4b4" stroke-width="1"/>
<text x="464.5" y="570" font-family="Liberation Sans" font-size="10" fill="#e0e0e0" textLength="30" lengthAdjust="spacingAndGlyphs">19 Mar 15:30</text>
<line x1="505.0" y1="557" x2="505.0" y2="560" stroke="#b4b4b4" stroke-width="1"/>
<text x="505.5" y="570" font-family="Liberation Sans" font-size="10" fill="#e0e0e0" textLength="30" lengthAdjust="spacingAndGlyphs">20 Mar 09:30</text>
<line x1="545.0" y1="557" x2="545.0" y2="560" stroke="#b4b4b4" stroke-width="1"/>
<text x="545.5" y="570" font-family="Liberation Sans" font-size="10" fill="#e0e0e0" textLength="30" lengthAdjust="spacingAndGlyphs">23 Mar 12:30</text>
<line x1="585.5" y1="557" x2="585.5" y2="560" stroke="#b4b4b4" stroke-width="1"/>
<text x="586.0" y="570" font-family="Liberation Sans" font-size="10" fill="#e0e0e0" textLength="30" lengthAdjust="spacingAndGlyphs">25 Mar 17:00</text>
<line x1="625.0" y1="557" x2="625.0" y2="560" stroke="#b4b4b4" stroke-width="1"/>
<text x="625.5" y="570" font-family="Liberation Sans" font-size="10" fill="#e0e0e0" textLength="30" lengthAdjust="spacingAndGlyphs">27 Mar 13:00</text>
<line x1="665.0" y1="557" x2="665.0" y2="560" stroke="#b4b4b4" stroke-width="1"/>
<text x="665.5" y="570" font-family="Liberation Sans" font-size="10" fill="#e0e0e0" textLength="30" lengthAdjust="spacingAndGlyphs">31 Mar 10:00</text>
<line x1="705.0" y1="557" x2="705.0" y2="560" stroke="#b4b4b4" stroke-width="1"/>
<text x="705.5" y="570" font-family="Liberation Sans" font-size="10" fill="#e0e0e0" textLength="27" lengthAdjust="spacingAndGlyphs">7 Apr 07:00</text>
<line x1="745.0" y1="557" x2="745.0" y2="560" stroke="#b4b4b4" stroke-width="1"/>
<text x="745.5" y="570" font-family="Liberation Sans" font-size="10" fill="#e0e0e0" textLength="30" lengthAdjust="spacingAndGlyphs">17 Apr 10:00</text>
</svg>
<svg class="a" style="left:0;top:0" width="800" height="600" font-family="Liberation Sans"><defs><clipPath id="tc"><rect x="0" y="0" width="143" height="344"/><rect x="0" y="345" width="800" height="255"/><rect x="143" y="0" width="657" height="68"/></clipPath></defs><g clip-path="url(#tc)"><text x="14.5" y="8.5" font-size="13" fill="#a4a4a4" text-anchor="start" textLength="9.5" lengthAdjust="spacingAndGlyphs">File</text><text x="32.5" y="8.5" font-size="13" fill="#a4a4a4" text-anchor="start" textLength="13.5" lengthAdjust="spacingAndGlyphs">View</text><text x="55" y="8.5" font-size="13" fill="#a4a4a4" text-anchor="start" textLength="14.5" lengthAdjust="spacingAndGlyphs">Insert</text><text x="78.5" y="8.5" font-size="13" fill="#a4a4a4" text-anchor="start" textLength="17" lengthAdjust="spacingAndGlyphs">Charts</text><text x="104.5" y="8.5" font-size="13" fill="#a4a4a4" text-anchor="start" textLength="15.5" lengthAdjust="spacingAndGlyphs">Tools</text><text x="127.7" y="8.5" font-size="13" fill="#a4a4a4" text-anchor="start" textLength="23" lengthAdjust="spacingAndGlyphs">Window</text><text x="159.3" y="8.5" font-size="13" fill="#a4a4a4" text-anchor="start" textLength="12.7" lengthAdjust="spacingAndGlyphs">Help</text><text x="4" y="80" font-size="11" fill="#262626" text-anchor="start" textLength="63.5" lengthAdjust="spacingAndGlyphs" stroke="#262626" stroke-width="0.3">Market Watch: 03:54:10</text><text x="135" y="79" font-size="10" fill="#404040" text-anchor="start" textLength="4.5" lengthAdjust="spacingAndGlyphs" stroke="#404040" stroke-width="0.1">x</text><text x="4.5" y="96.5" font-size="10.5" fill="#333" text-anchor="start" textLength="21.5" lengthAdjust="spacingAndGlyphs" stroke="#333" stroke-width="0.25">Symbol</text><text x="71.8" y="96.5" font-size="10.5" fill="#333" text-anchor="start" textLength="9.6" lengthAdjust="spacingAndGlyphs" stroke="#333" stroke-width="0.25">Bid</text><text x="103.3" y="96.5" font-size="10.5" fill="#333" text-anchor="start" textLength="10.5" lengthAdjust="spacingAndGlyphs" stroke="#333" stroke-width="0.25">Ask</text><text x="127.5" y="96.5" font-size="10.5" fill="#333" text-anchor="start" textLength="2" lengthAdjust="spacingAndGlyphs" stroke="#333" stroke-width="0.25">!</text><text x="13" y="118.8" font-size="11.2" fill="#cfe6ff" text-anchor="start" textLength="22.4" lengthAdjust="spacingAndGlyphs" stroke="#cfe6ff" stroke-width="0.3">EURUSD</text><text x="81.4" y="118.8" font-size="11.2" fill="#cfe6ff" text-anchor="end" textLength="21.0" lengthAdjust="spacingAndGlyphs" stroke="#cfe6ff" stroke-width="0.3">1.18899</text><text x="113.8" y="118.8" font-size="11.2" fill="#cfe6ff" text-anchor="end" textLength="21.0" lengthAdjust="spacingAndGlyphs" stroke="#cfe6ff" stroke-width="0.3">1.18902</text><text x="129.6" y="118.8" font-size="11.2" fill="#cfe6ff" text-anchor="end" textLength="3.2" lengthAdjust="spacingAndGlyphs" stroke="#cfe6ff" stroke-width="0.3">3</text><text x="13" y="137.8" font-size="11.2" fill="#3a2a10" text-anchor="start" textLength="22.5" lengthAdjust="spacingAndGlyphs" stroke="#3a2a10" stroke-width="0.3">XAUUSD</text><text x="81.4" y="137.8" font-size="11.2" fill="#4a3418" text-anchor="end" textLength="24.200000000000003" lengthAdjust="spacingAndGlyphs" stroke="#4a3418" stroke-width="0.3">1965.160</text><text x="113.8" y="137.8" font-size="11.2" fill="#4a3418" text-anchor="end" textLength="24.200000000000003" lengthAdjust="spacingAndGlyphs" stroke="#4a3418" stroke-width="0.3">1965.420</text><text x="129.6" y="137.8" font-size="11.2" fill="#4a3418" text-anchor="end" textLength="9.600000000000001" lengthAdjust="spacingAndGlyphs" stroke="#4a3418" stroke-width="0.3">260</text><text x="13" y="156.8" font-size="11.2" fill="#383838" text-anchor="start" textLength="21.7" lengthAdjust="spacingAndGlyphs" stroke="#383838" stroke-width="0.3">D30EUR</text><text x="81.4" y="156.8" font-size="11.2" fill="#4a4a90" text-anchor="end" textLength="24.200000000000003" lengthAdjust="spacingAndGlyphs" stroke="#4a4a90" stroke-width="0.3">13174.25</text><text x="113.8" y="156.8" font-size="11.2" fill="#4a4a90" text-anchor="end" textLength="24.200000000000003" lengthAdjust="spacingAndGlyphs" stroke="#4a4a90" stroke-width="0.3">13177.35</text><text x="129.6" y="156.8" font-size="11.2" fill="#4a4a90" text-anchor="end" textLength="9.600000000000001" lengthAdjust="spacingAndGlyphs" stroke="#4a4a90" stroke-width="0.3">310</text><text x="13" y="175.8" font-size="11.2" fill="#383838" text-anchor="start" textLength="22.4" lengthAdjust="spacingAndGlyphs" stroke="#383838" stroke-width="0.3">GBPUSD</text><text x="81.4" y="175.8" font-size="11.2" fill="#4a4a90" text-anchor="end" textLength="21.0" lengthAdjust="spacingAndGlyphs" stroke="#4a4a90" stroke-width="0.3">1.28570</text><text x="113.8" y="175.8" font-size="11.2" fill="#4a4a90" text-anchor="end" textLength="21.0" lengthAdjust="spacingAndGlyphs" stroke="#4a4a90" stroke-width="0.3">1.28573</text><text x="129.6" y="175.8" font-size="11.2" fill="#4a4a90" text-anchor="end" textLength="3.2" lengthAdjust="spacingAndGlyphs" stroke="#4a4a90" stroke-width="0.3">3</text><text x="13" y="194.8" font-size="11.2" fill="#383838" text-anchor="start" textLength="22.8" lengthAdjust="spacingAndGlyphs" stroke="#383838" stroke-width="0.3">AUDUSD</text><text x="81.4" y="194.8" font-size="11.2" fill="#4a4a90" text-anchor="end" textLength="21.0" lengthAdjust="spacingAndGlyphs" stroke="#4a4a90" stroke-width="0.3">0.73166</text><text x="113.8" y="194.8" font-size="11.2" fill="#4a4a90" text-anchor="end" textLength="21.0" lengthAdjust="spacingAndGlyphs" stroke="#4a4a90" stroke-width="0.3">0.73169</text><text x="129.6" y="194.8" font-size="11.2" fill="#4a4a90" text-anchor="end" textLength="3.2" lengthAdjust="spacingAndGlyphs" stroke="#4a4a90" stroke-width="0.3">3</text><text x="13" y="213.8" font-size="11.2" fill="#383838" text-anchor="start" textLength="20.4" lengthAdjust="spacingAndGlyphs" stroke="#383838" stroke-width="0.3">USDJPY</text><text x="81.4" y="213.8" font-size="11.2" fill="#4a4a90" text-anchor="end" textLength="21.0" lengthAdjust="spacingAndGlyphs" stroke="#4a4a90" stroke-width="0.3">105.658</text><text x="113.8" y="213.8" font-size="11.2" fill="#4a4a90" text-anchor="end" textLength="21.0" lengthAdjust="spacingAndGlyphs" stroke="#4a4a90" stroke-width="0.3">105.659</text><text x="129.6" y="213.8" font-size="11.2" fill="#4a4a90" text-anchor="end" textLength="3.2" lengthAdjust="spacingAndGlyphs" stroke="#4a4a90" stroke-width="0.3">1</text><text x="13" y="232.8" font-size="11.2" fill="#383838" text-anchor="start" textLength="22.4" lengthAdjust="spacingAndGlyphs" stroke="#383838" stroke-width="0.3">AUDCHF</text><text x="81.4" y="232.8" font-size="11.2" fill="#4a4a90" text-anchor="end" textLength="21.0" lengthAdjust="spacingAndGlyphs" stroke="#4a4a90" stroke-width="0.3">0.66354</text><text x="113.8" y="232.8" font-size="11.2" fill="#4a4a90" text-anchor="end" textLength="21.0" lengthAdjust="spacingAndGlyphs" stroke="#4a4a90" stroke-width="0.3">0.66362</text><text x="129.6" y="232.8" font-size="11.2" fill="#4a4a90" text-anchor="end" textLength="3.2" lengthAdjust="spacingAndGlyphs" stroke="#4a4a90" stroke-width="0.3">8</text><text x="13" y="251.8" font-size="11.2" fill="#383838" text-anchor="start" textLength="22.9" lengthAdjust="spacingAndGlyphs" stroke="#383838" stroke-width="0.3">AUDCAD</text><text x="81.4" y="251.8" font-size="11.2" fill="#4a4a90" text-anchor="end" textLength="21.0" lengthAdjust="spacingAndGlyphs" stroke="#4a4a90" stroke-width="0.3">0.96232</text><text x="113.8" y="251.8" font-size="11.2" fill="#4a4a90" text-anchor="end" textLength="21.0" lengthAdjust="spacingAndGlyphs" stroke="#4a4a90" stroke-width="0.3">0.96237</text><text x="129.6" y="251.8" font-size="11.2" fill="#4a4a90" text-anchor="end" textLength="3.2" lengthAdjust="spacingAndGlyphs" stroke="#4a4a90" stroke-width="0.3">5</text><text x="13" y="270.8" font-size="11.2" fill="#383838" text-anchor="start" textLength="20.8" lengthAdjust="spacingAndGlyphs" stroke="#383838" stroke-width="0.3">AUDJPY</text><text x="81.4" y="270.8" font-size="11.2" fill="#4a4a90" text-anchor="end" textLength="17.8" lengthAdjust="spacingAndGlyphs" stroke="#4a4a90" stroke-width="0.3">77.307</text><text x="113.8" y="270.8" font-size="11.2" fill="#4a4a90" text-anchor="end" textLength="17.8" lengthAdjust="spacingAndGlyphs" stroke="#4a4a90" stroke-width="0.3">77.312</text><text x="129.6" y="270.8" font-size="11.2" fill="#4a4a90" text-anchor="end" textLength="3.2" lengthAdjust="spacingAndGlyphs" stroke="#4a4a90" stroke-width="0.3">5</text><text x="13" y="289.8" font-size="11.2" fill="#383838" text-anchor="start" textLength="23.3" lengthAdjust="spacingAndGlyphs" stroke="#383838" stroke-width="0.3">AUDNZD</text><text x="81.4" y="289.8" font-size="11.2" fill="#4a4a90" text-anchor="end" textLength="21.0" lengthAdjust="spacingAndGlyphs" stroke="#4a4a90" stroke-width="0.3">1.08980</text><text x="113.8" y="289.8" font-size="11.2" fill="#4a4a90" text-anchor="end" textLength="21.0" lengthAdjust="spacingAndGlyphs" stroke="#4a4a90" stroke-width="0.3">1.08987</text><text x="129.6" y="289.8" font-size="11.2" fill="#4a4a90" text-anchor="end" textLength="3.2" lengthAdjust="spacingAndGlyphs" stroke="#4a4a90" stroke-width="0.3">7</text><text x="13" y="308.8" font-size="11.2" fill="#383838" text-anchor="start" textLength="20.0" lengthAdjust="spacingAndGlyphs" stroke="#383838" stroke-width="0.3">CHFJPY</text><text x="81.4" y="308.8" font-size="11.2" fill="#4a4a90" text-anchor="end" textLength="21.0" lengthAdjust="spacingAndGlyphs" stroke="#4a4a90" stroke-width="0.3">116.498</text><text x="113.8" y="308.8" font-size="11.2" fill="#4a4a90" text-anchor="end" textLength="21.0" lengthAdjust="spacingAndGlyphs" stroke="#4a4a90" stroke-width="0.3">116.505</text><text x="129.6" y="308.8" font-size="11.2" fill="#4a4a90" text-anchor="end" textLength="3.2" lengthAdjust="spacingAndGlyphs" stroke="#4a4a90" stroke-width="0.3">7</text><text x="13" y="327.8" font-size="11.2" fill="#383838" text-anchor="start" textLength="20.5" lengthAdjust="spacingAndGlyphs" stroke="#383838" stroke-width="0.3">CADJPY</text><text x="81.4" y="327.8" font-size="11.2" fill="#4a4a90" text-anchor="end" textLength="17.8" lengthAdjust="spacingAndGlyphs" stroke="#4a4a90" stroke-width="0.3">80.329</text><text x="113.8" y="327.8" font-size="11.2" fill="#4a4a90" text-anchor="end" textLength="17.8" lengthAdjust="spacingAndGlyphs" stroke="#4a4a90" stroke-width="0.3">80.334</text><text x="129.6" y="327.8" font-size="11.2" fill="#4a4a90" text-anchor="end" textLength="3.2" lengthAdjust="spacingAndGlyphs" stroke="#4a4a90" stroke-width="0.3">5</text><text x="13" y="346.8" font-size="11.2" fill="#383838" text-anchor="start" textLength="22.1" lengthAdjust="spacingAndGlyphs" stroke="#383838" stroke-width="0.3">CADCHF</text><text x="81.4" y="346.8" font-size="11.2" fill="#4a4a90" text-anchor="end" textLength="21.0" lengthAdjust="spacingAndGlyphs" stroke="#4a4a90" stroke-width="0.3">0.69851</text><text x="113.8" y="346.8" font-size="11.2" fill="#4a4a90" text-anchor="end" textLength="21.0" lengthAdjust="spacingAndGlyphs" stroke="#4a4a90" stroke-width="0.3">0.69858</text><text x="129.6" y="346.8" font-size="11.2" fill="#4a4a90" text-anchor="end" textLength="3.2" lengthAdjust="spacingAndGlyphs" stroke="#4a4a90" stroke-width="0.3">7</text><text x="133" y="96" font-size="10" fill="#606060" text-anchor="start" textLength="5" lengthAdjust="spacingAndGlyphs">^</text><text x="133" y="340" font-size="8" fill="#606060" text-anchor="start" textLength="5" lengthAdjust="spacingAndGlyphs">v</text><text x="9" y="356.5" font-size="10.5" fill="#333" text-anchor="start" textLength="23" lengthAdjust="spacingAndGlyphs" stroke="#333" stroke-width="0.25">Symbols</text><text x="42.5" y="356.5" font-size="10.5" fill="#a8a8a8" text-anchor="start" textLength="27" lengthAdjust="spacingAndGlyphs" stroke="#a8a8a8" stroke-width="0.2">Tick Chart</text><text x="3.5" y="381" font-size="11" fill="#262626" text-anchor="start" textLength="25" lengthAdjust="spacingAndGlyphs" stroke="#262626" stroke-width="0.3">Navigator</text><text x="135" y="381" font-size="10" fill="#404040" text-anchor="start" textLength="4.5" lengthAdjust="spacingAndGlyphs" stroke="#404040" stroke-width="0.1">x</text><text x="133" y="399" font-size="10" fill="#606060" text-anchor="start" textLength="5" lengthAdjust="spacingAndGlyphs">^</text><text x="133" y="564" font-size="8" fill="#606060" text-anchor="start" textLength="5" lengthAdjust="spacingAndGlyphs">v</text><text x="37.5" y="399" font-size="11.2" fill="#2a2a2a" text-anchor="start" textLength="19.5" lengthAdjust="spacingAndGlyphs" stroke="#2a2a2a" stroke-width="0.3">Market</text><text x="37.5" y="416" font-size="11.2" fill="#2a2a2a" text-anchor="start" textLength="26.5" lengthAdjust="spacingAndGlyphs" stroke="#2a2a2a" stroke-width="0.3">Examples</text><text x="37.5" y="433" font-size="11.2" fill="#2a2a2a" text-anchor="start" textLength="33" lengthAdjust="spacingAndGlyphs" stroke="#2a2a2a" stroke-width="0.3">Accelerator</text><text x="37.5" y="450" font-size="11.2" fill="#2a2a2a" text-anchor="start" textLength="38.3" lengthAdjust="spacingAndGlyphs" stroke="#2a2a2a" stroke-width="0.3">Accumulation</text><text x="37.5" y="467" font-size="11.2" fill="#2a2a2a" text-anchor="start" textLength="25" lengthAdjust="spacingAndGlyphs" stroke="#2a2a2a" stroke-width="0.3">Alligator</text><text x="37.5" y="484" font-size="11.2" fill="#2a2a2a" text-anchor="start" textLength="12" lengthAdjust="spacingAndGlyphs" stroke="#2a2a2a" stroke-width="0.3">ATR</text><text x="37.5" y="501" font-size="11.2" fill="#2a2a2a" text-anchor="start" textLength="27" lengthAdjust="spacingAndGlyphs" stroke="#2a2a2a" stroke-width="0.3">Awesome</text><text x="37.5" y="518" font-size="11.2" fill="#2a2a2a" text-anchor="start" textLength="18" lengthAdjust="spacingAndGlyphs" stroke="#2a2a2a" stroke-width="0.3">Bands</text><text x="37.5" y="535" font-size="11.2" fill="#2a2a2a" text-anchor="start" textLength="17" lengthAdjust="spacingAndGlyphs" stroke="#2a2a2a" stroke-width="0.3">Bears</text><text x="37.5" y="552" font-size="11.2" fill="#2a2a2a" text-anchor="start" textLength="14" lengthAdjust="spacingAndGlyphs" stroke="#2a2a2a" stroke-width="0.3">Bulls</text><text x="37.5" y="569" font-size="11.2" fill="#2a2a2a" text-anchor="start" textLength="9.5" lengthAdjust="spacingAndGlyphs" stroke="#2a2a2a" stroke-width="0.3">CCI</text><text x="8" y="586" font-size="10.5" fill="#333" text-anchor="start" textLength="26" lengthAdjust="spacingAndGlyphs" stroke="#333" stroke-width="0.25">Common</text><text x="44" y="586" font-size="10.5" fill="#a8a8a8" text-anchor="start" textLength="25" lengthAdjust="spacingAndGlyphs" stroke="#a8a8a8" stroke-width="0.2">Favorites</text><text x="151" y="591" font-size="10.5" fill="#888" text-anchor="start" textLength="34" lengthAdjust="spacingAndGlyphs" stroke="#888" stroke-width="0.2">XAUUSD,H1</text><text x="196" y="591" font-size="10.5" fill="#888" text-anchor="start" textLength="34" lengthAdjust="spacingAndGlyphs" stroke="#888" stroke-width="0.2">XAUUSD,H1</text><text x="242" y="591" font-size="10.5" fill="#888" text-anchor="start" textLength="34" lengthAdjust="spacingAndGlyphs" stroke="#888" stroke-width="0.2">GBPUSD,H1</text><text x="286" y="591" font-size="10.5" fill="#888" text-anchor="start" textLength="34" lengthAdjust="spacingAndGlyphs" stroke="#888" stroke-width="0.2">AUDUSD,H1</text><text x="331" y="591" font-size="10.5" fill="#888" text-anchor="start" textLength="34" lengthAdjust="spacingAndGlyphs" stroke="#888" stroke-width="0.2">EURUSD,H1</text><text x="373" y="591" font-size="10.5" fill="#888" text-anchor="start" textLength="34" lengthAdjust="spacingAndGlyphs" stroke="#888" stroke-width="0.2">XAUUSD,H1</text><text x="417" y="591" font-size="10.5" fill="#333" text-anchor="start" textLength="58" lengthAdjust="spacingAndGlyphs" stroke="#333" stroke-width="0.25">EURUSD,M2 (offline)</text><text x="783" y="589" font-size="9" fill="#a0a0a0" text-anchor="start" textLength="4" lengthAdjust="spacingAndGlyphs">◂</text><text x="793" y="589" font-size="9" fill="#a0a0a0" text-anchor="start" textLength="4" lengthAdjust="spacingAndGlyphs">▸</text></g></svg>
</body></html>
